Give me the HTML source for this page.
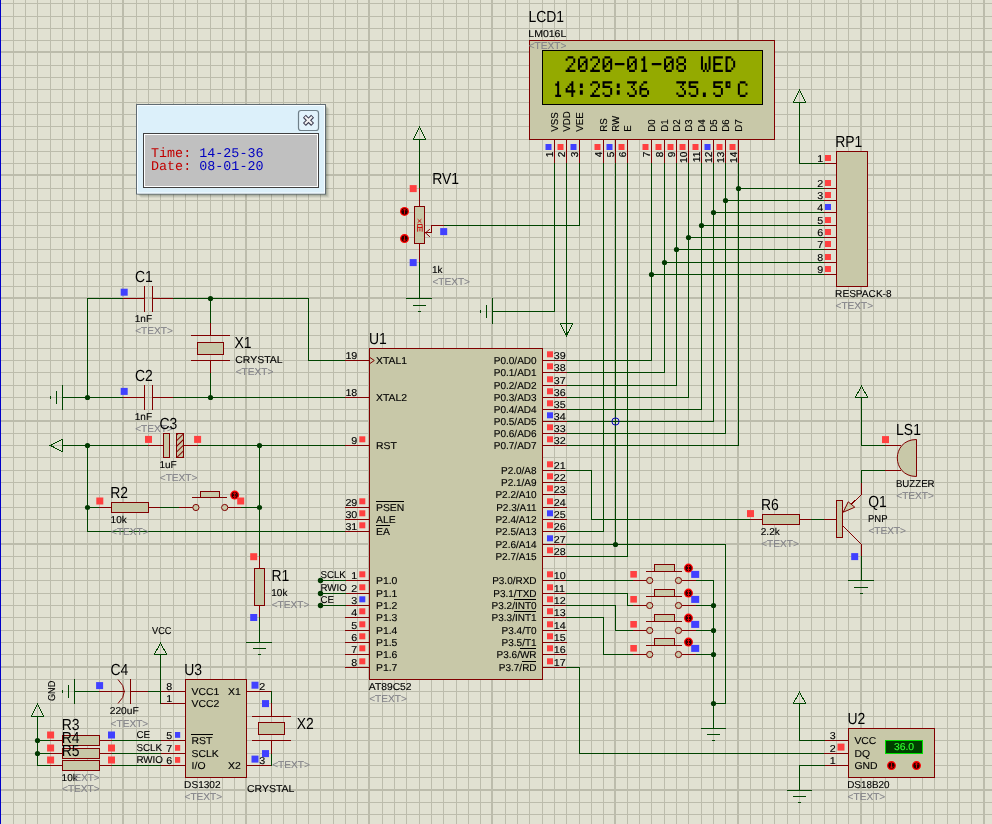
<!DOCTYPE html>
<html><head><meta charset="utf-8"><title>Proteus schematic</title>
<style>
html,body{margin:0;padding:0;background:#e1e1d2;overflow:hidden}
svg{display:block;font-family:"Liberation Sans",sans-serif;will-change:transform;text-rendering:geometricPrecision}
svg polyline,svg line,svg rect{shape-rendering:crispEdges}
svg .aa, svg .aa *{shape-rendering:auto}
</style></head><body>
<svg width="992" height="824" viewBox="0 0 992 824">
<rect x="0" y="0" width="992" height="824" fill="#e1e1d2"/>
<g fill="#bcbcac"><rect x="-1" y="0" width="2" height="824"/><rect x="13" y="0" width="1" height="824"/><rect x="25" y="0" width="1" height="824"/><rect x="37" y="0" width="1" height="824"/><rect x="50" y="0" width="1" height="824"/><rect x="62" y="0" width="1" height="824"/><rect x="74" y="0" width="1" height="824"/><rect x="87" y="0" width="1" height="824"/><rect x="99" y="0" width="1" height="824"/><rect x="111" y="0" width="1" height="824"/><rect x="122" y="0" width="2" height="824"/><rect x="136" y="0" width="1" height="824"/><rect x="148" y="0" width="1" height="824"/><rect x="160" y="0" width="1" height="824"/><rect x="173" y="0" width="1" height="824"/><rect x="185" y="0" width="1" height="824"/><rect x="197" y="0" width="1" height="824"/><rect x="210" y="0" width="1" height="824"/><rect x="222" y="0" width="1" height="824"/><rect x="234" y="0" width="1" height="824"/><rect x="245" y="0" width="2" height="824"/><rect x="259" y="0" width="1" height="824"/><rect x="271" y="0" width="1" height="824"/><rect x="283" y="0" width="1" height="824"/><rect x="296" y="0" width="1" height="824"/><rect x="308" y="0" width="1" height="824"/><rect x="320" y="0" width="1" height="824"/><rect x="333" y="0" width="1" height="824"/><rect x="345" y="0" width="1" height="824"/><rect x="357" y="0" width="1" height="824"/><rect x="368" y="0" width="2" height="824"/><rect x="382" y="0" width="1" height="824"/><rect x="394" y="0" width="1" height="824"/><rect x="406" y="0" width="1" height="824"/><rect x="419" y="0" width="1" height="824"/><rect x="431" y="0" width="1" height="824"/><rect x="443" y="0" width="1" height="824"/><rect x="456" y="0" width="1" height="824"/><rect x="468" y="0" width="1" height="824"/><rect x="480" y="0" width="1" height="824"/><rect x="491" y="0" width="2" height="824"/><rect x="505" y="0" width="1" height="824"/><rect x="517" y="0" width="1" height="824"/><rect x="529" y="0" width="1" height="824"/><rect x="542" y="0" width="1" height="824"/><rect x="554" y="0" width="1" height="824"/><rect x="566" y="0" width="1" height="824"/><rect x="579" y="0" width="1" height="824"/><rect x="591" y="0" width="1" height="824"/><rect x="603" y="0" width="1" height="824"/><rect x="614" y="0" width="2" height="824"/><rect x="627" y="0" width="1" height="824"/><rect x="639" y="0" width="1" height="824"/><rect x="651" y="0" width="1" height="824"/><rect x="664" y="0" width="1" height="824"/><rect x="676" y="0" width="1" height="824"/><rect x="688" y="0" width="1" height="824"/><rect x="701" y="0" width="1" height="824"/><rect x="713" y="0" width="1" height="824"/><rect x="725" y="0" width="1" height="824"/><rect x="737" y="0" width="2" height="824"/><rect x="750" y="0" width="1" height="824"/><rect x="762" y="0" width="1" height="824"/><rect x="774" y="0" width="1" height="824"/><rect x="787" y="0" width="1" height="824"/><rect x="799" y="0" width="1" height="824"/><rect x="811" y="0" width="1" height="824"/><rect x="824" y="0" width="1" height="824"/><rect x="836" y="0" width="1" height="824"/><rect x="848" y="0" width="1" height="824"/><rect x="860" y="0" width="2" height="824"/><rect x="873" y="0" width="1" height="824"/><rect x="885" y="0" width="1" height="824"/><rect x="897" y="0" width="1" height="824"/><rect x="910" y="0" width="1" height="824"/><rect x="922" y="0" width="1" height="824"/><rect x="934" y="0" width="1" height="824"/><rect x="947" y="0" width="1" height="824"/><rect x="959" y="0" width="1" height="824"/><rect x="971" y="0" width="1" height="824"/><rect x="983" y="0" width="2" height="824"/><rect x="0" y="3" width="992" height="1"/><rect x="0" y="16" width="992" height="1"/><rect x="0" y="28" width="992" height="1"/><rect x="0" y="40" width="992" height="1"/><rect x="0" y="51" width="992" height="2"/><rect x="0" y="65" width="992" height="1"/><rect x="0" y="77" width="992" height="1"/><rect x="0" y="89" width="992" height="1"/><rect x="0" y="102" width="992" height="1"/><rect x="0" y="114" width="992" height="1"/><rect x="0" y="126" width="992" height="1"/><rect x="0" y="139" width="992" height="1"/><rect x="0" y="151" width="992" height="1"/><rect x="0" y="163" width="992" height="1"/><rect x="0" y="174" width="992" height="2"/><rect x="0" y="188" width="992" height="1"/><rect x="0" y="200" width="992" height="1"/><rect x="0" y="212" width="992" height="1"/><rect x="0" y="225" width="992" height="1"/><rect x="0" y="237" width="992" height="1"/><rect x="0" y="249" width="992" height="1"/><rect x="0" y="262" width="992" height="1"/><rect x="0" y="274" width="992" height="1"/><rect x="0" y="286" width="992" height="1"/><rect x="0" y="297" width="992" height="2"/><rect x="0" y="311" width="992" height="1"/><rect x="0" y="323" width="992" height="1"/><rect x="0" y="335" width="992" height="1"/><rect x="0" y="348" width="992" height="1"/><rect x="0" y="360" width="992" height="1"/><rect x="0" y="372" width="992" height="1"/><rect x="0" y="385" width="992" height="1"/><rect x="0" y="397" width="992" height="1"/><rect x="0" y="409" width="992" height="1"/><rect x="0" y="420" width="992" height="2"/><rect x="0" y="433" width="992" height="1"/><rect x="0" y="445" width="992" height="1"/><rect x="0" y="457" width="992" height="1"/><rect x="0" y="470" width="992" height="1"/><rect x="0" y="482" width="992" height="1"/><rect x="0" y="494" width="992" height="1"/><rect x="0" y="507" width="992" height="1"/><rect x="0" y="519" width="992" height="1"/><rect x="0" y="531" width="992" height="1"/><rect x="0" y="543" width="992" height="2"/><rect x="0" y="556" width="992" height="1"/><rect x="0" y="568" width="992" height="1"/><rect x="0" y="580" width="992" height="1"/><rect x="0" y="593" width="992" height="1"/><rect x="0" y="605" width="992" height="1"/><rect x="0" y="617" width="992" height="1"/><rect x="0" y="630" width="992" height="1"/><rect x="0" y="642" width="992" height="1"/><rect x="0" y="654" width="992" height="1"/><rect x="0" y="666" width="992" height="2"/><rect x="0" y="679" width="992" height="1"/><rect x="0" y="691" width="992" height="1"/><rect x="0" y="703" width="992" height="1"/><rect x="0" y="716" width="992" height="1"/><rect x="0" y="728" width="992" height="1"/><rect x="0" y="740" width="992" height="1"/><rect x="0" y="753" width="992" height="1"/><rect x="0" y="765" width="992" height="1"/><rect x="0" y="777" width="992" height="1"/><rect x="0" y="789" width="992" height="2"/><rect x="0" y="802" width="992" height="1"/><rect x="0" y="814" width="992" height="1"/></g>
<rect x="0" y="0" width="1.3" height="824" fill="#0000c8"/>
<polyline points="554.5,139.5 554.5,163.5" fill="none" stroke="#800000" stroke-width="1" stroke-linecap="square" />
<polyline points="566.5,139.5 566.5,163.5" fill="none" stroke="#800000" stroke-width="1" stroke-linecap="square" />
<polyline points="579.5,139.5 579.5,163.5" fill="none" stroke="#800000" stroke-width="1" stroke-linecap="square" />
<polyline points="603.5,139.5 603.5,163.5" fill="none" stroke="#800000" stroke-width="1" stroke-linecap="square" />
<polyline points="615.5,139.5 615.5,163.5" fill="none" stroke="#800000" stroke-width="1" stroke-linecap="square" />
<polyline points="627.5,139.5 627.5,163.5" fill="none" stroke="#800000" stroke-width="1" stroke-linecap="square" />
<polyline points="651.5,139.5 651.5,163.5" fill="none" stroke="#800000" stroke-width="1" stroke-linecap="square" />
<polyline points="664.5,139.5 664.5,163.5" fill="none" stroke="#800000" stroke-width="1" stroke-linecap="square" />
<polyline points="676.5,139.5 676.5,163.5" fill="none" stroke="#800000" stroke-width="1" stroke-linecap="square" />
<polyline points="688.5,139.5 688.5,163.5" fill="none" stroke="#800000" stroke-width="1" stroke-linecap="square" />
<polyline points="701.5,139.5 701.5,163.5" fill="none" stroke="#800000" stroke-width="1" stroke-linecap="square" />
<polyline points="713.5,139.5 713.5,163.5" fill="none" stroke="#800000" stroke-width="1" stroke-linecap="square" />
<polyline points="725.5,139.5 725.5,163.5" fill="none" stroke="#800000" stroke-width="1" stroke-linecap="square" />
<polyline points="738.5,139.5 738.5,163.5" fill="none" stroke="#800000" stroke-width="1" stroke-linecap="square" />
<rect x="529.5" y="40.5" width="245" height="99" fill="#c8c8a8" stroke="#800000" stroke-width="1" />
<rect x="542.5" y="50.5" width="220" height="54" fill="#94aa00" stroke="#000000" stroke-width="1" />
<path class="aa" d="M567.55 56.25h2.02v2.36h-2.02zM569.45 56.25h2.02v2.36h-2.02zM571.35 56.25h2.02v2.36h-2.02zM565.65 58.49h2.02v2.36h-2.02zM573.25 58.49h2.02v2.36h-2.02zM573.25 60.73h2.02v2.36h-2.02zM571.35 62.97h2.02v2.36h-2.02zM569.45 65.21h2.02v2.36h-2.02zM567.55 67.45h2.02v2.36h-2.02zM565.65 69.69h2.02v2.36h-2.02zM567.55 69.69h2.02v2.36h-2.02zM569.45 69.69h2.02v2.36h-2.02zM571.35 69.69h2.02v2.36h-2.02zM573.25 69.69h2.02v2.36h-2.02zM579.85 56.25h2.02v2.36h-2.02zM581.75 56.25h2.02v2.36h-2.02zM583.65 56.25h2.02v2.36h-2.02zM577.95 58.49h2.02v2.36h-2.02zM585.55 58.49h2.02v2.36h-2.02zM577.95 60.73h2.02v2.36h-2.02zM583.65 60.73h2.02v2.36h-2.02zM585.55 60.73h2.02v2.36h-2.02zM577.95 62.97h2.02v2.36h-2.02zM581.75 62.97h2.02v2.36h-2.02zM585.55 62.97h2.02v2.36h-2.02zM577.95 65.21h2.02v2.36h-2.02zM579.85 65.21h2.02v2.36h-2.02zM585.55 65.21h2.02v2.36h-2.02zM577.95 67.45h2.02v2.36h-2.02zM585.55 67.45h2.02v2.36h-2.02zM579.85 69.69h2.02v2.36h-2.02zM581.75 69.69h2.02v2.36h-2.02zM583.65 69.69h2.02v2.36h-2.02zM592.15 56.25h2.02v2.36h-2.02zM594.05 56.25h2.02v2.36h-2.02zM595.95 56.25h2.02v2.36h-2.02zM590.25 58.49h2.02v2.36h-2.02zM597.85 58.49h2.02v2.36h-2.02zM597.85 60.73h2.02v2.36h-2.02zM595.95 62.97h2.02v2.36h-2.02zM594.05 65.21h2.02v2.36h-2.02zM592.15 67.45h2.02v2.36h-2.02zM590.25 69.69h2.02v2.36h-2.02zM592.15 69.69h2.02v2.36h-2.02zM594.05 69.69h2.02v2.36h-2.02zM595.95 69.69h2.02v2.36h-2.02zM597.85 69.69h2.02v2.36h-2.02zM604.45 56.25h2.02v2.36h-2.02zM606.35 56.25h2.02v2.36h-2.02zM608.25 56.25h2.02v2.36h-2.02zM602.55 58.49h2.02v2.36h-2.02zM610.15 58.49h2.02v2.36h-2.02zM602.55 60.73h2.02v2.36h-2.02zM608.25 60.73h2.02v2.36h-2.02zM610.15 60.73h2.02v2.36h-2.02zM602.55 62.97h2.02v2.36h-2.02zM606.35 62.97h2.02v2.36h-2.02zM610.15 62.97h2.02v2.36h-2.02zM602.55 65.21h2.02v2.36h-2.02zM604.45 65.21h2.02v2.36h-2.02zM610.15 65.21h2.02v2.36h-2.02zM602.55 67.45h2.02v2.36h-2.02zM610.15 67.45h2.02v2.36h-2.02zM604.45 69.69h2.02v2.36h-2.02zM606.35 69.69h2.02v2.36h-2.02zM608.25 69.69h2.02v2.36h-2.02zM614.85 62.97h2.02v2.36h-2.02zM616.75 62.97h2.02v2.36h-2.02zM618.65 62.97h2.02v2.36h-2.02zM620.55 62.97h2.02v2.36h-2.02zM622.45 62.97h2.02v2.36h-2.02zM629.05 56.25h2.02v2.36h-2.02zM630.95 56.25h2.02v2.36h-2.02zM632.85 56.25h2.02v2.36h-2.02zM627.15 58.49h2.02v2.36h-2.02zM634.75 58.49h2.02v2.36h-2.02zM627.15 60.73h2.02v2.36h-2.02zM632.85 60.73h2.02v2.36h-2.02zM634.75 60.73h2.02v2.36h-2.02zM627.15 62.97h2.02v2.36h-2.02zM630.95 62.97h2.02v2.36h-2.02zM634.75 62.97h2.02v2.36h-2.02zM627.15 65.21h2.02v2.36h-2.02zM629.05 65.21h2.02v2.36h-2.02zM634.75 65.21h2.02v2.36h-2.02zM627.15 67.45h2.02v2.36h-2.02zM634.75 67.45h2.02v2.36h-2.02zM629.05 69.69h2.02v2.36h-2.02zM630.95 69.69h2.02v2.36h-2.02zM632.85 69.69h2.02v2.36h-2.02zM643.25 56.25h2.02v2.36h-2.02zM641.35 58.49h2.02v2.36h-2.02zM643.25 58.49h2.02v2.36h-2.02zM643.25 60.73h2.02v2.36h-2.02zM643.25 62.97h2.02v2.36h-2.02zM643.25 65.21h2.02v2.36h-2.02zM643.25 67.45h2.02v2.36h-2.02zM641.35 69.69h2.02v2.36h-2.02zM643.25 69.69h2.02v2.36h-2.02zM645.15 69.69h2.02v2.36h-2.02zM651.75 62.97h2.02v2.36h-2.02zM653.65 62.97h2.02v2.36h-2.02zM655.55 62.97h2.02v2.36h-2.02zM657.45 62.97h2.02v2.36h-2.02zM659.35 62.97h2.02v2.36h-2.02zM665.95 56.25h2.02v2.36h-2.02zM667.85 56.25h2.02v2.36h-2.02zM669.75 56.25h2.02v2.36h-2.02zM664.05 58.49h2.02v2.36h-2.02zM671.65 58.49h2.02v2.36h-2.02zM664.05 60.73h2.02v2.36h-2.02zM669.75 60.73h2.02v2.36h-2.02zM671.65 60.73h2.02v2.36h-2.02zM664.05 62.97h2.02v2.36h-2.02zM667.85 62.97h2.02v2.36h-2.02zM671.65 62.97h2.02v2.36h-2.02zM664.05 65.21h2.02v2.36h-2.02zM665.95 65.21h2.02v2.36h-2.02zM671.65 65.21h2.02v2.36h-2.02zM664.05 67.45h2.02v2.36h-2.02zM671.65 67.45h2.02v2.36h-2.02zM665.95 69.69h2.02v2.36h-2.02zM667.85 69.69h2.02v2.36h-2.02zM669.75 69.69h2.02v2.36h-2.02zM678.25 56.25h2.02v2.36h-2.02zM680.15 56.25h2.02v2.36h-2.02zM682.05 56.25h2.02v2.36h-2.02zM676.35 58.49h2.02v2.36h-2.02zM683.95 58.49h2.02v2.36h-2.02zM676.35 60.73h2.02v2.36h-2.02zM683.95 60.73h2.02v2.36h-2.02zM678.25 62.97h2.02v2.36h-2.02zM680.15 62.97h2.02v2.36h-2.02zM682.05 62.97h2.02v2.36h-2.02zM676.35 65.21h2.02v2.36h-2.02zM683.95 65.21h2.02v2.36h-2.02zM676.35 67.45h2.02v2.36h-2.02zM683.95 67.45h2.02v2.36h-2.02zM678.25 69.69h2.02v2.36h-2.02zM680.15 69.69h2.02v2.36h-2.02zM682.05 69.69h2.02v2.36h-2.02zM700.95 56.25h2.02v2.36h-2.02zM708.55 56.25h2.02v2.36h-2.02zM700.95 58.49h2.02v2.36h-2.02zM708.55 58.49h2.02v2.36h-2.02zM700.95 60.73h2.02v2.36h-2.02zM708.55 60.73h2.02v2.36h-2.02zM700.95 62.97h2.02v2.36h-2.02zM704.75 62.97h2.02v2.36h-2.02zM708.55 62.97h2.02v2.36h-2.02zM700.95 65.21h2.02v2.36h-2.02zM704.75 65.21h2.02v2.36h-2.02zM708.55 65.21h2.02v2.36h-2.02zM700.95 67.45h2.02v2.36h-2.02zM704.75 67.45h2.02v2.36h-2.02zM708.55 67.45h2.02v2.36h-2.02zM702.85 69.69h2.02v2.36h-2.02zM706.65 69.69h2.02v2.36h-2.02zM713.25 56.25h2.02v2.36h-2.02zM715.15 56.25h2.02v2.36h-2.02zM717.05 56.25h2.02v2.36h-2.02zM718.95 56.25h2.02v2.36h-2.02zM720.85 56.25h2.02v2.36h-2.02zM713.25 58.49h2.02v2.36h-2.02zM713.25 60.73h2.02v2.36h-2.02zM713.25 62.97h2.02v2.36h-2.02zM715.15 62.97h2.02v2.36h-2.02zM717.05 62.97h2.02v2.36h-2.02zM718.95 62.97h2.02v2.36h-2.02zM713.25 65.21h2.02v2.36h-2.02zM713.25 67.45h2.02v2.36h-2.02zM713.25 69.69h2.02v2.36h-2.02zM715.15 69.69h2.02v2.36h-2.02zM717.05 69.69h2.02v2.36h-2.02zM718.95 69.69h2.02v2.36h-2.02zM720.85 69.69h2.02v2.36h-2.02zM725.55 56.25h2.02v2.36h-2.02zM727.45 56.25h2.02v2.36h-2.02zM729.35 56.25h2.02v2.36h-2.02zM725.55 58.49h2.02v2.36h-2.02zM731.25 58.49h2.02v2.36h-2.02zM725.55 60.73h2.02v2.36h-2.02zM733.15 60.73h2.02v2.36h-2.02zM725.55 62.97h2.02v2.36h-2.02zM733.15 62.97h2.02v2.36h-2.02zM725.55 65.21h2.02v2.36h-2.02zM733.15 65.21h2.02v2.36h-2.02zM725.55 67.45h2.02v2.36h-2.02zM731.25 67.45h2.02v2.36h-2.02zM725.55 69.69h2.02v2.36h-2.02zM727.45 69.69h2.02v2.36h-2.02zM729.35 69.69h2.02v2.36h-2.02zM557.15 81.25h2.02v2.36h-2.02zM555.25 83.49h2.02v2.36h-2.02zM557.15 83.49h2.02v2.36h-2.02zM557.15 85.73h2.02v2.36h-2.02zM557.15 87.97h2.02v2.36h-2.02zM557.15 90.21h2.02v2.36h-2.02zM557.15 92.45h2.02v2.36h-2.02zM555.25 94.69h2.02v2.36h-2.02zM557.15 94.69h2.02v2.36h-2.02zM559.05 94.69h2.02v2.36h-2.02zM571.35 81.25h2.02v2.36h-2.02zM569.45 83.49h2.02v2.36h-2.02zM571.35 83.49h2.02v2.36h-2.02zM567.55 85.73h2.02v2.36h-2.02zM571.35 85.73h2.02v2.36h-2.02zM565.65 87.97h2.02v2.36h-2.02zM571.35 87.97h2.02v2.36h-2.02zM565.65 90.21h2.02v2.36h-2.02zM567.55 90.21h2.02v2.36h-2.02zM569.45 90.21h2.02v2.36h-2.02zM571.35 90.21h2.02v2.36h-2.02zM573.25 90.21h2.02v2.36h-2.02zM571.35 92.45h2.02v2.36h-2.02zM571.35 94.69h2.02v2.36h-2.02zM579.85 83.49h2.97v2.36h-2.97zM579.85 85.73h2.97v2.36h-2.97zM579.85 90.21h2.97v2.36h-2.97zM579.85 92.45h2.97v2.36h-2.97zM592.15 81.25h2.02v2.36h-2.02zM594.05 81.25h2.02v2.36h-2.02zM595.95 81.25h2.02v2.36h-2.02zM590.25 83.49h2.02v2.36h-2.02zM597.85 83.49h2.02v2.36h-2.02zM597.85 85.73h2.02v2.36h-2.02zM595.95 87.97h2.02v2.36h-2.02zM594.05 90.21h2.02v2.36h-2.02zM592.15 92.45h2.02v2.36h-2.02zM590.25 94.69h2.02v2.36h-2.02zM592.15 94.69h2.02v2.36h-2.02zM594.05 94.69h2.02v2.36h-2.02zM595.95 94.69h2.02v2.36h-2.02zM597.85 94.69h2.02v2.36h-2.02zM602.55 81.25h2.02v2.36h-2.02zM604.45 81.25h2.02v2.36h-2.02zM606.35 81.25h2.02v2.36h-2.02zM608.25 81.25h2.02v2.36h-2.02zM610.15 81.25h2.02v2.36h-2.02zM602.55 83.49h2.02v2.36h-2.02zM602.55 85.73h2.02v2.36h-2.02zM604.45 85.73h2.02v2.36h-2.02zM606.35 85.73h2.02v2.36h-2.02zM608.25 85.73h2.02v2.36h-2.02zM610.15 87.97h2.02v2.36h-2.02zM610.15 90.21h2.02v2.36h-2.02zM602.55 92.45h2.02v2.36h-2.02zM610.15 92.45h2.02v2.36h-2.02zM604.45 94.69h2.02v2.36h-2.02zM606.35 94.69h2.02v2.36h-2.02zM608.25 94.69h2.02v2.36h-2.02zM616.75 83.49h2.97v2.36h-2.97zM616.75 85.73h2.97v2.36h-2.97zM616.75 90.21h2.97v2.36h-2.97zM616.75 92.45h2.97v2.36h-2.97zM627.15 81.25h2.02v2.36h-2.02zM629.05 81.25h2.02v2.36h-2.02zM630.95 81.25h2.02v2.36h-2.02zM632.85 81.25h2.02v2.36h-2.02zM634.75 81.25h2.02v2.36h-2.02zM632.85 83.49h2.02v2.36h-2.02zM630.95 85.73h2.02v2.36h-2.02zM632.85 87.97h2.02v2.36h-2.02zM634.75 90.21h2.02v2.36h-2.02zM627.15 92.45h2.02v2.36h-2.02zM634.75 92.45h2.02v2.36h-2.02zM629.05 94.69h2.02v2.36h-2.02zM630.95 94.69h2.02v2.36h-2.02zM632.85 94.69h2.02v2.36h-2.02zM643.25 81.25h2.02v2.36h-2.02zM645.15 81.25h2.02v2.36h-2.02zM641.35 83.49h2.02v2.36h-2.02zM639.45 85.73h2.02v2.36h-2.02zM639.45 87.97h2.02v2.36h-2.02zM641.35 87.97h2.02v2.36h-2.02zM643.25 87.97h2.02v2.36h-2.02zM645.15 87.97h2.02v2.36h-2.02zM639.45 90.21h2.02v2.36h-2.02zM647.05 90.21h2.02v2.36h-2.02zM639.45 92.45h2.02v2.36h-2.02zM647.05 92.45h2.02v2.36h-2.02zM641.35 94.69h2.02v2.36h-2.02zM643.25 94.69h2.02v2.36h-2.02zM645.15 94.69h2.02v2.36h-2.02zM676.35 81.25h2.02v2.36h-2.02zM678.25 81.25h2.02v2.36h-2.02zM680.15 81.25h2.02v2.36h-2.02zM682.05 81.25h2.02v2.36h-2.02zM683.95 81.25h2.02v2.36h-2.02zM682.05 83.49h2.02v2.36h-2.02zM680.15 85.73h2.02v2.36h-2.02zM682.05 87.97h2.02v2.36h-2.02zM683.95 90.21h2.02v2.36h-2.02zM676.35 92.45h2.02v2.36h-2.02zM683.95 92.45h2.02v2.36h-2.02zM678.25 94.69h2.02v2.36h-2.02zM680.15 94.69h2.02v2.36h-2.02zM682.05 94.69h2.02v2.36h-2.02zM688.65 81.25h2.02v2.36h-2.02zM690.55 81.25h2.02v2.36h-2.02zM692.45 81.25h2.02v2.36h-2.02zM694.35 81.25h2.02v2.36h-2.02zM696.25 81.25h2.02v2.36h-2.02zM688.65 83.49h2.02v2.36h-2.02zM688.65 85.73h2.02v2.36h-2.02zM690.55 85.73h2.02v2.36h-2.02zM692.45 85.73h2.02v2.36h-2.02zM694.35 85.73h2.02v2.36h-2.02zM696.25 87.97h2.02v2.36h-2.02zM696.25 90.21h2.02v2.36h-2.02zM688.65 92.45h2.02v2.36h-2.02zM696.25 92.45h2.02v2.36h-2.02zM690.55 94.69h2.02v2.36h-2.02zM692.45 94.69h2.02v2.36h-2.02zM694.35 94.69h2.02v2.36h-2.02zM702.85 92.45h2.97v2.36h-2.97zM702.85 94.69h2.97v2.36h-2.97zM713.25 81.25h2.02v2.36h-2.02zM715.15 81.25h2.02v2.36h-2.02zM717.05 81.25h2.02v2.36h-2.02zM718.95 81.25h2.02v2.36h-2.02zM720.85 81.25h2.02v2.36h-2.02zM713.25 83.49h2.02v2.36h-2.02zM713.25 85.73h2.02v2.36h-2.02zM715.15 85.73h2.02v2.36h-2.02zM717.05 85.73h2.02v2.36h-2.02zM718.95 85.73h2.02v2.36h-2.02zM720.85 87.97h2.02v2.36h-2.02zM720.85 90.21h2.02v2.36h-2.02zM713.25 92.45h2.02v2.36h-2.02zM720.85 92.45h2.02v2.36h-2.02zM715.15 94.69h2.02v2.36h-2.02zM717.05 94.69h2.02v2.36h-2.02zM718.95 94.69h2.02v2.36h-2.02zM725.55 81.25h2.02v2.36h-2.02zM727.45 81.25h2.97v2.36h-2.97zM725.55 83.49h2.02v2.36h-2.02zM729.35 83.49h1.07v2.36h-1.07zM725.55 85.73h2.02v2.36h-2.02zM727.45 85.73h2.97v2.36h-2.97zM739.75 81.25h2.02v2.36h-2.02zM741.65 81.25h2.02v2.36h-2.02zM743.55 81.25h2.02v2.36h-2.02zM737.85 83.49h2.02v2.36h-2.02zM745.45 83.49h2.02v2.36h-2.02zM737.85 85.73h2.02v2.36h-2.02zM737.85 87.97h2.02v2.36h-2.02zM737.85 90.21h2.02v2.36h-2.02zM737.85 92.45h2.02v2.36h-2.02zM745.45 92.45h2.02v2.36h-2.02zM739.75 94.69h2.02v2.36h-2.02zM741.65 94.69h2.02v2.36h-2.02zM743.55 94.69h2.02v2.36h-2.02z" fill="#000000"/>
<rect x="545.5" y="144" width="6" height="6" fill="#4040ff" class="aa"/>
<text transform="translate(558.1 131.8) rotate(-90) scale(0.97 1)" font-size="10" fill="#000000" stroke="#000000" stroke-width="0.13" >VSS</text>
<text transform="translate(552.9 151.8) rotate(-90)" font-size="10" fill="#000000" text-anchor="end" stroke="#000000" stroke-width="0.2" >1</text>
<rect x="557.5" y="144" width="6" height="6" fill="#ff4040" class="aa"/>
<text transform="translate(570.1 131.8) rotate(-90) scale(0.97 1)" font-size="10" fill="#000000" stroke="#000000" stroke-width="0.13" >VDD</text>
<text transform="translate(564.9 151.8) rotate(-90)" font-size="10" fill="#000000" text-anchor="end" stroke="#000000" stroke-width="0.2" >2</text>
<rect x="570.5" y="144" width="6" height="6" fill="#4040ff" class="aa"/>
<text transform="translate(583.1 131.8) rotate(-90) scale(0.97 1)" font-size="10" fill="#000000" stroke="#000000" stroke-width="0.13" >VEE</text>
<text transform="translate(577.9 151.8) rotate(-90)" font-size="10" fill="#000000" text-anchor="end" stroke="#000000" stroke-width="0.2" >3</text>
<rect x="594.5" y="144" width="6" height="6" fill="#ff4040" class="aa"/>
<text transform="translate(607.1 131.8) rotate(-90) scale(0.97 1)" font-size="10" fill="#000000" stroke="#000000" stroke-width="0.13" >RS</text>
<text transform="translate(601.9 151.8) rotate(-90)" font-size="10" fill="#000000" text-anchor="end" stroke="#000000" stroke-width="0.2" >4</text>
<rect x="606.5" y="144" width="6" height="6" fill="#4040ff" class="aa"/>
<text transform="translate(619.1 131.8) rotate(-90) scale(0.97 1)" font-size="10" fill="#000000" stroke="#000000" stroke-width="0.13" >RW</text>
<text transform="translate(613.9 151.8) rotate(-90)" font-size="10" fill="#000000" text-anchor="end" stroke="#000000" stroke-width="0.2" >5</text>
<rect x="618.5" y="144" width="6" height="6" fill="#ff4040" class="aa"/>
<text transform="translate(631.1 131.8) rotate(-90) scale(0.97 1)" font-size="10" fill="#000000" stroke="#000000" stroke-width="0.13" >E</text>
<text transform="translate(625.9 151.8) rotate(-90)" font-size="10" fill="#000000" text-anchor="end" stroke="#000000" stroke-width="0.2" >6</text>
<rect x="642.5" y="144" width="6" height="6" fill="#ff4040" class="aa"/>
<text transform="translate(655.1 131.8) rotate(-90) scale(0.97 1)" font-size="10" fill="#000000" stroke="#000000" stroke-width="0.13" >D0</text>
<text transform="translate(649.9 151.8) rotate(-90)" font-size="10" fill="#000000" text-anchor="end" stroke="#000000" stroke-width="0.2" >7</text>
<rect x="655.5" y="144" width="6" height="6" fill="#ff4040" class="aa"/>
<text transform="translate(668.1 131.8) rotate(-90) scale(0.97 1)" font-size="10" fill="#000000" stroke="#000000" stroke-width="0.13" >D1</text>
<text transform="translate(662.9 151.8) rotate(-90)" font-size="10" fill="#000000" text-anchor="end" stroke="#000000" stroke-width="0.2" >8</text>
<rect x="667.5" y="144" width="6" height="6" fill="#ff4040" class="aa"/>
<text transform="translate(680.1 131.8) rotate(-90) scale(0.97 1)" font-size="10" fill="#000000" stroke="#000000" stroke-width="0.13" >D2</text>
<text transform="translate(674.9 151.8) rotate(-90)" font-size="10" fill="#000000" text-anchor="end" stroke="#000000" stroke-width="0.2" >9</text>
<rect x="679.5" y="144" width="6" height="6" fill="#ff4040" class="aa"/>
<text transform="translate(692.1 131.8) rotate(-90) scale(0.97 1)" font-size="10" fill="#000000" stroke="#000000" stroke-width="0.13" >D3</text>
<text transform="translate(686.9 151.8) rotate(-90)" font-size="10" fill="#000000" text-anchor="end" stroke="#000000" stroke-width="0.2" >10</text>
<rect x="692.5" y="144" width="6" height="6" fill="#ff4040" class="aa"/>
<text transform="translate(705.1 131.8) rotate(-90) scale(0.97 1)" font-size="10" fill="#000000" stroke="#000000" stroke-width="0.13" >D4</text>
<text transform="translate(699.9 151.8) rotate(-90)" font-size="10" fill="#000000" text-anchor="end" stroke="#000000" stroke-width="0.2" >11</text>
<rect x="704.5" y="144" width="6" height="6" fill="#4040ff" class="aa"/>
<text transform="translate(717.1 131.8) rotate(-90) scale(0.97 1)" font-size="10" fill="#000000" stroke="#000000" stroke-width="0.13" >D5</text>
<text transform="translate(711.9 151.8) rotate(-90)" font-size="10" fill="#000000" text-anchor="end" stroke="#000000" stroke-width="0.2" >12</text>
<rect x="716.5" y="144" width="6" height="6" fill="#ff4040" class="aa"/>
<text transform="translate(729.1 131.8) rotate(-90) scale(0.97 1)" font-size="10" fill="#000000" stroke="#000000" stroke-width="0.13" >D6</text>
<text transform="translate(723.9 151.8) rotate(-90)" font-size="10" fill="#000000" text-anchor="end" stroke="#000000" stroke-width="0.2" >13</text>
<rect x="729.5" y="144" width="6" height="6" fill="#ff4040" class="aa"/>
<text transform="translate(742.1 131.8) rotate(-90) scale(0.97 1)" font-size="10" fill="#000000" stroke="#000000" stroke-width="0.13" >D7</text>
<text transform="translate(736.9 151.8) rotate(-90)" font-size="10" fill="#000000" text-anchor="end" stroke="#000000" stroke-width="0.2" >14</text>
<text transform="translate(528.5 22) scale(0.87 1)" font-size="16" fill="#000">LCD1</text>
<text transform="translate(528.3 37)" font-size="10" fill="#000000" textLength="38" lengthAdjust="spacingAndGlyphs" stroke="#000000" stroke-width="0.13" >LM016L</text>
<text transform="translate(528.7 49)" font-size="10" fill="#828288" textLength="37.6" lengthAdjust="spacingAndGlyphs" stroke="#828288" stroke-width="0.1" >&lt;TEXT&gt;</text>
<polyline points="554.5,163.5 554.5,311.5 492.5,311.5" fill="none" stroke="#004400" stroke-width="1" stroke-linecap="square" />
<line x1="492.5" y1="298.5" x2="492.5" y2="323.5" stroke="#004400" stroke-width="1" stroke-linecap="square"/>
<line x1="486.5" y1="305.5" x2="486.5" y2="317.5" stroke="#004400" stroke-width="1" stroke-linecap="square"/>
<line x1="480.5" y1="310.5" x2="480.5" y2="312.5" stroke="#004400" stroke-width="1" stroke-linecap="square"/>
<polyline points="566.5,163.5 566.5,335.5" fill="none" stroke="#004400" stroke-width="1" stroke-linecap="square" />
<polyline points="560.2,323.5 572.8,323.5 566.5,335.5 560.2,323.5" fill="none" stroke="#004400" stroke-width="1" stroke-linecap="square" />
<polyline points="579.5,163.5 579.5,225.5 443.5,225.5" fill="none" stroke="#004400" stroke-width="1" stroke-linecap="square" />
<polyline points="603.5,163.5 603.5,531.5 566.5,531.5" fill="none" stroke="#004400" stroke-width="1" stroke-linecap="square" />
<polyline points="615.5,163.5 615.5,544.5" fill="none" stroke="#004400" stroke-width="1" stroke-linecap="square" />
<polyline points="627.5,163.5 627.5,556.5 566.5,556.5" fill="none" stroke="#004400" stroke-width="1" stroke-linecap="square" />
<polyline points="651.5,163.5 651.5,360.5 566.5,360.5" fill="none" stroke="#004400" stroke-width="1" stroke-linecap="square" />
<polyline points="651.5,274.5 824.5,274.5" fill="none" stroke="#004400" stroke-width="1" stroke-linecap="square" />
<circle cx="651.5" cy="274.5" r="2.6" fill="#003800"/>
<polyline points="664.5,163.5 664.5,372.5 566.5,372.5" fill="none" stroke="#004400" stroke-width="1" stroke-linecap="square" />
<polyline points="664.5,262.5 824.5,262.5" fill="none" stroke="#004400" stroke-width="1" stroke-linecap="square" />
<circle cx="664.5" cy="262.5" r="2.6" fill="#003800"/>
<polyline points="676.5,163.5 676.5,385.5 566.5,385.5" fill="none" stroke="#004400" stroke-width="1" stroke-linecap="square" />
<polyline points="676.5,249.5 824.5,249.5" fill="none" stroke="#004400" stroke-width="1" stroke-linecap="square" />
<circle cx="676.5" cy="249.5" r="2.6" fill="#003800"/>
<polyline points="688.5,163.5 688.5,397.5 566.5,397.5" fill="none" stroke="#004400" stroke-width="1" stroke-linecap="square" />
<polyline points="688.5,237.5 824.5,237.5" fill="none" stroke="#004400" stroke-width="1" stroke-linecap="square" />
<circle cx="688.5" cy="237.5" r="2.6" fill="#003800"/>
<polyline points="701.5,163.5 701.5,409.5 566.5,409.5" fill="none" stroke="#004400" stroke-width="1" stroke-linecap="square" />
<polyline points="701.5,225.5 824.5,225.5" fill="none" stroke="#004400" stroke-width="1" stroke-linecap="square" />
<circle cx="701.5" cy="225.5" r="2.6" fill="#003800"/>
<polyline points="713.5,163.5 713.5,421.5 566.5,421.5" fill="none" stroke="#004400" stroke-width="1" stroke-linecap="square" />
<polyline points="713.5,212.5 824.5,212.5" fill="none" stroke="#004400" stroke-width="1" stroke-linecap="square" />
<circle cx="713.5" cy="212.5" r="2.6" fill="#003800"/>
<polyline points="725.5,163.5 725.5,433.5 566.5,433.5" fill="none" stroke="#004400" stroke-width="1" stroke-linecap="square" />
<polyline points="725.5,200.5 824.5,200.5" fill="none" stroke="#004400" stroke-width="1" stroke-linecap="square" />
<circle cx="725.5" cy="200.5" r="2.6" fill="#003800"/>
<polyline points="738.5,163.5 738.5,445.5 566.5,445.5" fill="none" stroke="#004400" stroke-width="1" stroke-linecap="square" />
<polyline points="738.5,188.5 824.5,188.5" fill="none" stroke="#004400" stroke-width="1" stroke-linecap="square" />
<circle cx="738.5" cy="188.5" r="2.6" fill="#003800"/>
<polyline points="824.5,163.5 836.5,163.5" fill="none" stroke="#800000" stroke-width="1" stroke-linecap="square" />
<rect x="825" y="155" width="6" height="6" fill="#ff4040" class="aa"/>
<text transform="translate(823.3 161.7) scale(1.07 1)" font-size="10" fill="#000000" text-anchor="end" stroke="#000000" stroke-width="0.13" >1</text>
<polyline points="824.5,188.5 836.5,188.5" fill="none" stroke="#800000" stroke-width="1" stroke-linecap="square" />
<rect x="825" y="180" width="6" height="6" fill="#ff4040" class="aa"/>
<text transform="translate(823.3 186.7) scale(1.07 1)" font-size="10" fill="#000000" text-anchor="end" stroke="#000000" stroke-width="0.13" >2</text>
<polyline points="824.5,200.5 836.5,200.5" fill="none" stroke="#800000" stroke-width="1" stroke-linecap="square" />
<rect x="825" y="192" width="6" height="6" fill="#ff4040" class="aa"/>
<text transform="translate(823.3 198.7) scale(1.07 1)" font-size="10" fill="#000000" text-anchor="end" stroke="#000000" stroke-width="0.13" >3</text>
<polyline points="824.5,212.5 836.5,212.5" fill="none" stroke="#800000" stroke-width="1" stroke-linecap="square" />
<rect x="825" y="204" width="6" height="6" fill="#4040ff" class="aa"/>
<text transform="translate(823.3 210.7) scale(1.07 1)" font-size="10" fill="#000000" text-anchor="end" stroke="#000000" stroke-width="0.13" >4</text>
<polyline points="824.5,225.5 836.5,225.5" fill="none" stroke="#800000" stroke-width="1" stroke-linecap="square" />
<rect x="825" y="217" width="6" height="6" fill="#ff4040" class="aa"/>
<text transform="translate(823.3 223.7) scale(1.07 1)" font-size="10" fill="#000000" text-anchor="end" stroke="#000000" stroke-width="0.13" >5</text>
<polyline points="824.5,237.5 836.5,237.5" fill="none" stroke="#800000" stroke-width="1" stroke-linecap="square" />
<rect x="825" y="229" width="6" height="6" fill="#ff4040" class="aa"/>
<text transform="translate(823.3 235.7) scale(1.07 1)" font-size="10" fill="#000000" text-anchor="end" stroke="#000000" stroke-width="0.13" >6</text>
<polyline points="824.5,249.5 836.5,249.5" fill="none" stroke="#800000" stroke-width="1" stroke-linecap="square" />
<rect x="825" y="241" width="6" height="6" fill="#ff4040" class="aa"/>
<text transform="translate(823.3 247.7) scale(1.07 1)" font-size="10" fill="#000000" text-anchor="end" stroke="#000000" stroke-width="0.13" >7</text>
<polyline points="824.5,262.5 836.5,262.5" fill="none" stroke="#800000" stroke-width="1" stroke-linecap="square" />
<rect x="825" y="254" width="6" height="6" fill="#ff4040" class="aa"/>
<text transform="translate(823.3 260.7) scale(1.07 1)" font-size="10" fill="#000000" text-anchor="end" stroke="#000000" stroke-width="0.13" >8</text>
<polyline points="824.5,274.5 836.5,274.5" fill="none" stroke="#800000" stroke-width="1" stroke-linecap="square" />
<rect x="825" y="266" width="6" height="6" fill="#ff4040" class="aa"/>
<text transform="translate(823.3 272.7) scale(1.07 1)" font-size="10" fill="#000000" text-anchor="end" stroke="#000000" stroke-width="0.13" >9</text>
<rect x="836.5" y="151.5" width="31" height="135" fill="#c8c8a8" stroke="#800000" stroke-width="1" />
<text transform="translate(835.2 147) scale(0.87 1)" font-size="16" fill="#000">RP1</text>
<text transform="translate(835.1 297)" font-size="10" fill="#000000" textLength="56.5" lengthAdjust="spacingAndGlyphs" stroke="#000000" stroke-width="0.13" >RESPACK-8</text>
<text transform="translate(835.5 309)" font-size="10" fill="#828288" textLength="37.6" lengthAdjust="spacingAndGlyphs" stroke="#828288" stroke-width="0.1" >&lt;TEXT&gt;</text>
<polyline points="793.2,102.5 805.8,102.5 799.5,90.2 793.2,102.5" fill="none" stroke="#004400" stroke-width="1" stroke-linecap="square" />
<polyline points="799.5,102.5 799.5,163.5 824.5,163.5" fill="none" stroke="#004400" stroke-width="1" stroke-linecap="square" />
<polyline points="413.2,139.5 425.8,139.5 419.5,127.2 413.2,139.5" fill="none" stroke="#004400" stroke-width="1" stroke-linecap="square" />
<polyline points="419.5,139.5 419.5,188.5" fill="none" stroke="#004400" stroke-width="1" stroke-linecap="square" />
<polyline points="419.5,188.5 419.5,206.5" fill="none" stroke="#800000" stroke-width="1" stroke-linecap="square" />
<polyline points="419.5,243.5 419.5,262.5" fill="none" stroke="#800000" stroke-width="1" stroke-linecap="square" />
<polyline points="419.5,262.5 419.5,298.5" fill="none" stroke="#004400" stroke-width="1" stroke-linecap="square" />
<line x1="406.5" y1="298.5" x2="431.5" y2="298.5" stroke="#004400" stroke-width="1" stroke-linecap="square"/>
<line x1="413.5" y1="305.5" x2="425.5" y2="305.5" stroke="#004400" stroke-width="1" stroke-linecap="square"/>
<line x1="418.5" y1="311.5" x2="420.5" y2="311.5" stroke="#004400" stroke-width="1" stroke-linecap="square"/>
<rect x="414.5" y="206.5" width="10" height="37" fill="#c8c8a8" stroke="#800000" stroke-width="1" />
<polyline points="425.5,232.5 431.5,232.5 431.5,225.5 443.5,225.5" fill="none" stroke="#800000" stroke-width="1" stroke-linecap="square" />
<polyline points="429.5,229.5 425.5,232.8 429.5,236.5" fill="none" stroke="#800000" stroke-width="1" stroke-linecap="square" class="aa"/>
<path class="aa" d="M417.6 219.2l3.8 3.6m0-3.6l-3.8 3.6M417.6 224.5h4.6m-4.6 3h4.6M417.6 224.5v7.2m4.6-7.2v7.2m-2.3-3.4v3" stroke="#c80000" stroke-width="0.9" fill="none"/>
<rect x="409.7" y="185.1" width="7" height="7" fill="#ff4040" class="aa"/>
<rect x="409.7" y="259.1" width="7" height="7" fill="#4040ff" class="aa"/>
<rect x="440.2" y="228.1" width="7" height="7" fill="#4040ff" class="aa"/>
<g class="aa"><circle cx="404.5" cy="211.4" r="4.5" fill="#ff0000"/>
<circle cx="404.5" cy="211.4" r="3.15" fill="#240000"/>
<path d="M404.5 208.9v5M402.9 210.5l1.6 -1.6l1.6 1.6" stroke="#ff0000" stroke-width="0.9" fill="none"/></g>
<g class="aa"><circle cx="404.5" cy="238.6" r="4.5" fill="#ff0000"/>
<circle cx="404.5" cy="238.6" r="3.15" fill="#240000"/>
<path d="M404.5 236.1v5M402.9 239.5l1.6 1.6l1.6 -1.6" stroke="#ff0000" stroke-width="0.9" fill="none"/></g>
<text transform="translate(432.2 184) scale(0.87 1)" font-size="16" fill="#000">RV1</text>
<text transform="translate(432 273)" font-size="10" fill="#000000" stroke="#000000" stroke-width="0.13" >1k</text>
<text transform="translate(432.4 285)" font-size="10" fill="#828288" textLength="37.6" lengthAdjust="spacingAndGlyphs" stroke="#828288" stroke-width="0.1" >&lt;TEXT&gt;</text>
<polyline points="123.5,298.5 87.5,298.5 87.5,397.5" fill="none" stroke="#004400" stroke-width="1" stroke-linecap="square" />
<polyline points="62.5,397.5 123.5,397.5" fill="none" stroke="#004400" stroke-width="1" stroke-linecap="square" />
<line x1="62.5" y1="385.5" x2="62.5" y2="409.5" stroke="#004400" stroke-width="1" stroke-linecap="square"/>
<line x1="56.5" y1="391.5" x2="56.5" y2="403.5" stroke="#004400" stroke-width="1" stroke-linecap="square"/>
<line x1="50.5" y1="396.5" x2="50.5" y2="398.5" stroke="#004400" stroke-width="1" stroke-linecap="square"/>
<circle cx="87.5" cy="397.5" r="2.6" fill="#003800"/>
<polyline points="123.5,298.5 144.5,298.5" fill="none" stroke="#800000" stroke-width="1" stroke-linecap="square" />
<polyline points="152.5,298.5 173.5,298.5" fill="none" stroke="#800000" stroke-width="1" stroke-linecap="square" />
<line x1="144.5" y1="286.5" x2="144.5" y2="311.5" stroke="#800000" stroke-width="1" stroke-linecap="square"/>
<line x1="152.5" y1="286.5" x2="152.5" y2="311.5" stroke="#800000" stroke-width="1" stroke-linecap="square"/>
<polyline points="123.5,397.5 144.5,397.5" fill="none" stroke="#800000" stroke-width="1" stroke-linecap="square" />
<polyline points="152.5,397.5 173.5,397.5" fill="none" stroke="#800000" stroke-width="1" stroke-linecap="square" />
<line x1="144.5" y1="385.5" x2="144.5" y2="409.5" stroke="#800000" stroke-width="1" stroke-linecap="square"/>
<line x1="152.5" y1="385.5" x2="152.5" y2="409.5" stroke="#800000" stroke-width="1" stroke-linecap="square"/>
<polyline points="173.5,298.5 308.5,298.5 308.5,360.5 345.5,360.5" fill="none" stroke="#004400" stroke-width="1" stroke-linecap="square" />
<polyline points="173.5,397.5 345.5,397.5" fill="none" stroke="#004400" stroke-width="1" stroke-linecap="square" />
<polyline points="210.5,298.5 210.5,323.5" fill="none" stroke="#004400" stroke-width="1" stroke-linecap="square" />
<polyline points="210.5,372.5 210.5,397.5" fill="none" stroke="#004400" stroke-width="1" stroke-linecap="square" />
<polyline points="210.5,323.5 210.5,335.5" fill="none" stroke="#800000" stroke-width="1" stroke-linecap="square" />
<polyline points="210.5,360.5 210.5,372.5" fill="none" stroke="#800000" stroke-width="1" stroke-linecap="square" />
<line x1="191.6" y1="335.5" x2="229.4" y2="335.5" stroke="#800000" stroke-width="1" stroke-linecap="square"/>
<line x1="191.6" y1="360.5" x2="229.4" y2="360.5" stroke="#800000" stroke-width="1" stroke-linecap="square"/>
<rect x="197.5" y="342.5" width="26" height="12" fill="#c8c8a8" stroke="#800000" stroke-width="1" />
<circle cx="210.5" cy="298.5" r="2.6" fill="#003800"/>
<circle cx="210.5" cy="397.5" r="2.6" fill="#003800"/>
<rect x="120.7" y="288.7" width="7" height="7" fill="#4040ff" class="aa"/>
<rect x="120.7" y="387.9" width="7" height="7" fill="#4040ff" class="aa"/>
<text transform="translate(135 282) scale(0.87 1)" font-size="16" fill="#000">C1</text>
<text transform="translate(134.8 322)" font-size="10" fill="#000000" stroke="#000000" stroke-width="0.13" >1nF</text>
<text transform="translate(135.2 334)" font-size="10" fill="#828288" textLength="37.6" lengthAdjust="spacingAndGlyphs" stroke="#828288" stroke-width="0.1" >&lt;TEXT&gt;</text>
<text transform="translate(135 381) scale(0.87 1)" font-size="16" fill="#000">C2</text>
<text transform="translate(134.8 420)" font-size="10" fill="#000000" stroke="#000000" stroke-width="0.13" >1nF</text>
<text transform="translate(135.2 432)" font-size="10" fill="#828288" textLength="37.6" lengthAdjust="spacingAndGlyphs" stroke="#828288" stroke-width="0.1" >&lt;TEXT&gt;</text>
<text transform="translate(234.5 348) scale(0.87 1)" font-size="16" fill="#000">X1</text>
<text transform="translate(235.3 363)" font-size="10" fill="#000000" textLength="47.3" lengthAdjust="spacingAndGlyphs" stroke="#000000" stroke-width="0.13" >CRYSTAL</text>
<text transform="translate(235.7 375)" font-size="10" fill="#828288" textLength="37.6" lengthAdjust="spacingAndGlyphs" stroke="#828288" stroke-width="0.1" >&lt;TEXT&gt;</text>
<polyline points="62.5,439.3 62.5,451.7 50.5,445.5 62.5,439.3" fill="none" stroke="#004400" stroke-width="1" stroke-linecap="square" />
<polyline points="62.5,445.5 148.5,445.5" fill="none" stroke="#004400" stroke-width="1" stroke-linecap="square" />
<polyline points="197.5,445.5 345.5,445.5" fill="none" stroke="#004400" stroke-width="1" stroke-linecap="square" />
<polyline points="148.5,445.5 163.5,445.5" fill="none" stroke="#800000" stroke-width="1" stroke-linecap="square" />
<polyline points="183.5,445.5 197.5,445.5" fill="none" stroke="#800000" stroke-width="1" stroke-linecap="square" />
<rect x="163.5" y="433.5" width="6" height="24" fill="#c8c8a8" stroke="#800000" stroke-width="1" />
<defs><pattern id="hat" width="4" height="4" patternUnits="userSpaceOnUse" patternTransform="rotate(-45)"><rect width="4" height="4" fill="#c8c8a8"/><rect width="4" height="1.2" fill="#800000"/></pattern></defs>
<rect x="176.5" y="433.5" width="7" height="24" fill="url(#hat)" stroke="#800000" stroke-width="1" class="aa"/>
<rect x="145" y="435.9" width="7" height="7" fill="#ff4040" class="aa"/>
<rect x="194.1" y="435.9" width="7" height="7" fill="#ff4040" class="aa"/>
<text transform="translate(159.5 429) scale(0.87 1)" font-size="16" fill="#000">C3</text>
<text transform="translate(159.4 468)" font-size="10" fill="#000000" stroke="#000000" stroke-width="0.13" >1uF</text>
<text transform="translate(159.8 481)" font-size="10" fill="#828288" textLength="37.6" lengthAdjust="spacingAndGlyphs" stroke="#828288" stroke-width="0.1" >&lt;TEXT&gt;</text>
<circle cx="87.5" cy="445.5" r="2.6" fill="#003800"/>
<circle cx="259.5" cy="445.5" r="2.6" fill="#003800"/>
<polyline points="87.5,445.5 87.5,531.5 345.5,531.5" fill="none" stroke="#004400" stroke-width="1" stroke-linecap="square" />
<polyline points="87.5,507.5 99.5,507.5" fill="none" stroke="#004400" stroke-width="1" stroke-linecap="square" />
<polyline points="99.5,507.5 111.5,507.5" fill="none" stroke="#800000" stroke-width="1" stroke-linecap="square" />
<polyline points="148.5,507.5 160.5,507.5" fill="none" stroke="#800000" stroke-width="1" stroke-linecap="square" />
<rect x="111.5" y="502.5" width="37" height="10" fill="#c8c8a8" stroke="#800000" stroke-width="1" />
<polyline points="160.5,507.5 179.5,507.5" fill="none" stroke="#004400" stroke-width="1" stroke-linecap="square" />
<polyline points="179.5,507.5 192.3,507.5" fill="none" stroke="#800000" stroke-width="1" stroke-linecap="square" />
<polyline points="228.3,507.5 241.5,507.5" fill="none" stroke="#800000" stroke-width="1" stroke-linecap="square" />
<circle cx="195.9" cy="507.5" r="3.1" fill="#c8c8a8" stroke="#800000" stroke-width="1"/>
<circle cx="224.7" cy="507.5" r="3.1" fill="#c8c8a8" stroke="#800000" stroke-width="1"/>
<line x1="192.5" y1="497.5" x2="226.7" y2="497.5" stroke="#800000" stroke-width="1" stroke-linecap="square"/>
<rect x="200.5" y="491.5" width="19" height="6" fill="#c8c8a8" stroke="#800000" stroke-width="1" />
<g class="aa"><circle cx="234.7" cy="495.1" r="4.5" fill="#ff0000"/>
<circle cx="234.7" cy="495.1" r="3.15" fill="#240000"/>
<path d="M234.7 492.6v5M233.1 494.2l1.6 -1.6l1.6 1.6M233.1 496l1.6 1.6l1.6 -1.6" stroke="#ff0000" stroke-width="0.9" fill="none"/></g>
<polyline points="241.5,507.5 259.5,507.5" fill="none" stroke="#004400" stroke-width="1" stroke-linecap="square" />
<circle cx="87.5" cy="507.5" r="2.6" fill="#003800"/>
<circle cx="259.5" cy="507.5" r="2.6" fill="#003800"/>
<rect x="96.3" y="497.5" width="7" height="7" fill="#ff4040" class="aa"/>
<rect x="237.2" y="497.5" width="7" height="7" fill="#ff4040" class="aa"/>
<text transform="translate(110.2 498) scale(0.87 1)" font-size="16" fill="#000">R2</text>
<text transform="translate(110.6 523)" font-size="10" fill="#000000" stroke="#000000" stroke-width="0.13" >10k</text>
<text transform="translate(111 535)" font-size="10" fill="#828288" textLength="37.6" lengthAdjust="spacingAndGlyphs" stroke="#828288" stroke-width="0.1" >&lt;TEXT&gt;</text>
<polyline points="259.5,445.5 259.5,556.5" fill="none" stroke="#004400" stroke-width="1" stroke-linecap="square" />
<polyline points="259.5,556.5 259.5,568.5" fill="none" stroke="#800000" stroke-width="1" stroke-linecap="square" />
<polyline points="259.5,605.5 259.5,617.5" fill="none" stroke="#800000" stroke-width="1" stroke-linecap="square" />
<polyline points="259.5,617.5 259.5,642.5" fill="none" stroke="#004400" stroke-width="1" stroke-linecap="square" />
<rect x="254.5" y="568.5" width="10" height="37" fill="#c8c8a8" stroke="#800000" stroke-width="1" />
<line x1="246.5" y1="642.5" x2="271.5" y2="642.5" stroke="#004400" stroke-width="1" stroke-linecap="square"/>
<line x1="253.5" y1="648.5" x2="265.5" y2="648.5" stroke="#004400" stroke-width="1" stroke-linecap="square"/>
<line x1="258.5" y1="654.5" x2="260.5" y2="654.5" stroke="#004400" stroke-width="1" stroke-linecap="square"/>
<rect x="250.2" y="553.2" width="7" height="7" fill="#ff4040" class="aa"/>
<rect x="250.2" y="614" width="7" height="7" fill="#4040ff" class="aa"/>
<text transform="translate(271.5 581) scale(0.87 1)" font-size="16" fill="#000">R1</text>
<text transform="translate(271.3 596)" font-size="10" fill="#000000" stroke="#000000" stroke-width="0.13" >10k</text>
<text transform="translate(271.7 608)" font-size="10" fill="#828288" textLength="37.6" lengthAdjust="spacingAndGlyphs" stroke="#828288" stroke-width="0.1" >&lt;TEXT&gt;</text>
<polyline points="345.5,360.5 369.5,360.5" fill="none" stroke="#800000" stroke-width="1" stroke-linecap="square" />
<polyline points="345.5,397.5 369.5,397.5" fill="none" stroke="#800000" stroke-width="1" stroke-linecap="square" />
<polyline points="345.5,445.5 369.5,445.5" fill="none" stroke="#800000" stroke-width="1" stroke-linecap="square" />
<polyline points="345.5,507.5 369.5,507.5" fill="none" stroke="#800000" stroke-width="1" stroke-linecap="square" />
<polyline points="345.5,519.5 369.5,519.5" fill="none" stroke="#800000" stroke-width="1" stroke-linecap="square" />
<polyline points="345.5,531.5 369.5,531.5" fill="none" stroke="#800000" stroke-width="1" stroke-linecap="square" />
<polyline points="345.5,580.5 369.5,580.5" fill="none" stroke="#800000" stroke-width="1" stroke-linecap="square" />
<polyline points="345.5,593.5 369.5,593.5" fill="none" stroke="#800000" stroke-width="1" stroke-linecap="square" />
<polyline points="345.5,605.5 369.5,605.5" fill="none" stroke="#800000" stroke-width="1" stroke-linecap="square" />
<polyline points="345.5,617.5 369.5,617.5" fill="none" stroke="#800000" stroke-width="1" stroke-linecap="square" />
<polyline points="345.5,630.5 369.5,630.5" fill="none" stroke="#800000" stroke-width="1" stroke-linecap="square" />
<polyline points="345.5,642.5 369.5,642.5" fill="none" stroke="#800000" stroke-width="1" stroke-linecap="square" />
<polyline points="345.5,654.5 369.5,654.5" fill="none" stroke="#800000" stroke-width="1" stroke-linecap="square" />
<polyline points="345.5,667.5 369.5,667.5" fill="none" stroke="#800000" stroke-width="1" stroke-linecap="square" />
<polyline points="542.5,360.5 566.5,360.5" fill="none" stroke="#800000" stroke-width="1" stroke-linecap="square" />
<polyline points="542.5,470.5 566.5,470.5" fill="none" stroke="#800000" stroke-width="1" stroke-linecap="square" />
<polyline points="542.5,580.5 566.5,580.5" fill="none" stroke="#800000" stroke-width="1" stroke-linecap="square" />
<polyline points="542.5,372.5 566.5,372.5" fill="none" stroke="#800000" stroke-width="1" stroke-linecap="square" />
<polyline points="542.5,482.5 566.5,482.5" fill="none" stroke="#800000" stroke-width="1" stroke-linecap="square" />
<polyline points="542.5,593.5 566.5,593.5" fill="none" stroke="#800000" stroke-width="1" stroke-linecap="square" />
<polyline points="542.5,385.5 566.5,385.5" fill="none" stroke="#800000" stroke-width="1" stroke-linecap="square" />
<polyline points="542.5,494.5 566.5,494.5" fill="none" stroke="#800000" stroke-width="1" stroke-linecap="square" />
<polyline points="542.5,605.5 566.5,605.5" fill="none" stroke="#800000" stroke-width="1" stroke-linecap="square" />
<polyline points="542.5,397.5 566.5,397.5" fill="none" stroke="#800000" stroke-width="1" stroke-linecap="square" />
<polyline points="542.5,507.5 566.5,507.5" fill="none" stroke="#800000" stroke-width="1" stroke-linecap="square" />
<polyline points="542.5,617.5 566.5,617.5" fill="none" stroke="#800000" stroke-width="1" stroke-linecap="square" />
<polyline points="542.5,409.5 566.5,409.5" fill="none" stroke="#800000" stroke-width="1" stroke-linecap="square" />
<polyline points="542.5,519.5 566.5,519.5" fill="none" stroke="#800000" stroke-width="1" stroke-linecap="square" />
<polyline points="542.5,630.5 566.5,630.5" fill="none" stroke="#800000" stroke-width="1" stroke-linecap="square" />
<polyline points="542.5,421.5 566.5,421.5" fill="none" stroke="#800000" stroke-width="1" stroke-linecap="square" />
<polyline points="542.5,531.5 566.5,531.5" fill="none" stroke="#800000" stroke-width="1" stroke-linecap="square" />
<polyline points="542.5,642.5 566.5,642.5" fill="none" stroke="#800000" stroke-width="1" stroke-linecap="square" />
<polyline points="542.5,433.5 566.5,433.5" fill="none" stroke="#800000" stroke-width="1" stroke-linecap="square" />
<polyline points="542.5,544.5 566.5,544.5" fill="none" stroke="#800000" stroke-width="1" stroke-linecap="square" />
<polyline points="542.5,654.5 566.5,654.5" fill="none" stroke="#800000" stroke-width="1" stroke-linecap="square" />
<polyline points="542.5,445.5 566.5,445.5" fill="none" stroke="#800000" stroke-width="1" stroke-linecap="square" />
<polyline points="542.5,556.5 566.5,556.5" fill="none" stroke="#800000" stroke-width="1" stroke-linecap="square" />
<polyline points="542.5,667.5 566.5,667.5" fill="none" stroke="#800000" stroke-width="1" stroke-linecap="square" />
<rect x="369.5" y="348.5" width="173" height="331" fill="#c8c8a8" stroke="#800000" stroke-width="1" />
<text transform="translate(357.3 358.6) scale(1.07 1)" font-size="10" fill="#000000" text-anchor="end" stroke="#000000" stroke-width="0.13" >19</text>
<text transform="translate(376 364) scale(1.04 1)" font-size="10" fill="#000000" stroke="#000000" stroke-width="0.13" >XTAL1</text>
<text transform="translate(357.3 395.6) scale(1.07 1)" font-size="10" fill="#000000" text-anchor="end" stroke="#000000" stroke-width="0.13" >18</text>
<text transform="translate(376 401) scale(1.04 1)" font-size="10" fill="#000000" stroke="#000000" stroke-width="0.13" >XTAL2</text>
<text transform="translate(357.3 443.6) scale(1.07 1)" font-size="10" fill="#000000" text-anchor="end" stroke="#000000" stroke-width="0.13" >9</text>
<text transform="translate(376 449) scale(1.04 1)" font-size="10" fill="#000000" stroke="#000000" stroke-width="0.13" >RST</text>
<rect x="359.3" y="436.3" width="6" height="6" fill="#ff4040" class="aa"/>
<text transform="translate(357.3 505.6) scale(1.07 1)" font-size="10" fill="#000000" text-anchor="end" stroke="#000000" stroke-width="0.13" >29</text>
<text transform="translate(376 511) scale(1.04 1)" font-size="10" fill="#000000" stroke="#000000" stroke-width="0.13" >PSEN</text>
<rect x="359.3" y="498.3" width="6" height="6" fill="#ff4040" class="aa"/>
<text transform="translate(357.3 517.6) scale(1.07 1)" font-size="10" fill="#000000" text-anchor="end" stroke="#000000" stroke-width="0.13" >30</text>
<text transform="translate(376 523) scale(1.04 1)" font-size="10" fill="#000000" stroke="#000000" stroke-width="0.13" >ALE</text>
<rect x="359.3" y="510.3" width="6" height="6" fill="#ff4040" class="aa"/>
<text transform="translate(357.3 529.6) scale(1.07 1)" font-size="10" fill="#000000" text-anchor="end" stroke="#000000" stroke-width="0.13" >31</text>
<text transform="translate(376 535) scale(1.04 1)" font-size="10" fill="#000000" stroke="#000000" stroke-width="0.13" >EA</text>
<rect x="359.3" y="522.3" width="6" height="6" fill="#ff4040" class="aa"/>
<text transform="translate(357.3 578.6) scale(1.07 1)" font-size="10" fill="#000000" text-anchor="end" stroke="#000000" stroke-width="0.13" >1</text>
<text transform="translate(376 584) scale(1.04 1)" font-size="10" fill="#000000" stroke="#000000" stroke-width="0.13" >P1.0</text>
<rect x="359.3" y="571.3" width="6" height="6" fill="#ff4040" class="aa"/>
<text transform="translate(357.3 591.6) scale(1.07 1)" font-size="10" fill="#000000" text-anchor="end" stroke="#000000" stroke-width="0.13" >2</text>
<text transform="translate(376 597) scale(1.04 1)" font-size="10" fill="#000000" stroke="#000000" stroke-width="0.13" >P1.1</text>
<rect x="359.3" y="584.3" width="6" height="6" fill="#ff4040" class="aa"/>
<text transform="translate(357.3 603.6) scale(1.07 1)" font-size="10" fill="#000000" text-anchor="end" stroke="#000000" stroke-width="0.13" >3</text>
<text transform="translate(376 609) scale(1.04 1)" font-size="10" fill="#000000" stroke="#000000" stroke-width="0.13" >P1.2</text>
<rect x="359.3" y="596.3" width="6" height="6" fill="#4040ff" class="aa"/>
<text transform="translate(357.3 615.6) scale(1.07 1)" font-size="10" fill="#000000" text-anchor="end" stroke="#000000" stroke-width="0.13" >4</text>
<text transform="translate(376 621) scale(1.04 1)" font-size="10" fill="#000000" stroke="#000000" stroke-width="0.13" >P1.3</text>
<rect x="359.3" y="608.3" width="6" height="6" fill="#ff4040" class="aa"/>
<text transform="translate(357.3 628.6) scale(1.07 1)" font-size="10" fill="#000000" text-anchor="end" stroke="#000000" stroke-width="0.13" >5</text>
<text transform="translate(376 634) scale(1.04 1)" font-size="10" fill="#000000" stroke="#000000" stroke-width="0.13" >P1.4</text>
<rect x="359.3" y="621.3" width="6" height="6" fill="#ff4040" class="aa"/>
<text transform="translate(357.3 640.6) scale(1.07 1)" font-size="10" fill="#000000" text-anchor="end" stroke="#000000" stroke-width="0.13" >6</text>
<text transform="translate(376 646) scale(1.04 1)" font-size="10" fill="#000000" stroke="#000000" stroke-width="0.13" >P1.5</text>
<rect x="359.3" y="633.3" width="6" height="6" fill="#ff4040" class="aa"/>
<text transform="translate(357.3 652.6) scale(1.07 1)" font-size="10" fill="#000000" text-anchor="end" stroke="#000000" stroke-width="0.13" >7</text>
<text transform="translate(376 658) scale(1.04 1)" font-size="10" fill="#000000" stroke="#000000" stroke-width="0.13" >P1.6</text>
<rect x="359.3" y="645.3" width="6" height="6" fill="#ff4040" class="aa"/>
<text transform="translate(357.3 665.6) scale(1.07 1)" font-size="10" fill="#000000" text-anchor="end" stroke="#000000" stroke-width="0.13" >8</text>
<text transform="translate(376 671) scale(1.04 1)" font-size="10" fill="#000000" stroke="#000000" stroke-width="0.13" >P1.7</text>
<rect x="359.3" y="658.3" width="6" height="6" fill="#ff4040" class="aa"/>
<text transform="translate(553.8 358.6) scale(1.07 1)" font-size="10" fill="#000000" stroke="#000000" stroke-width="0.13" >39</text>
<text transform="translate(536.6 364)" font-size="10" fill="#000000" text-anchor="end" stroke="#000000" stroke-width="0.13" >P0.0/AD0</text>
<rect x="547" y="351.3" width="6" height="6" fill="#ff4040" class="aa"/>
<text transform="translate(553.8 468.6) scale(1.07 1)" font-size="10" fill="#000000" stroke="#000000" stroke-width="0.13" >21</text>
<text transform="translate(536.6 474)" font-size="10" fill="#000000" text-anchor="end" stroke="#000000" stroke-width="0.13" >P2.0/A8</text>
<rect x="547" y="461.3" width="6" height="6" fill="#ff4040" class="aa"/>
<text transform="translate(553.8 578.6) scale(1.07 1)" font-size="10" fill="#000000" stroke="#000000" stroke-width="0.13" >10</text>
<text transform="translate(536.6 584)" font-size="10" fill="#000000" text-anchor="end" stroke="#000000" stroke-width="0.13" >P3.0/RXD</text>
<rect x="547" y="571.3" width="6" height="6" fill="#ff4040" class="aa"/>
<text transform="translate(553.8 370.6) scale(1.07 1)" font-size="10" fill="#000000" stroke="#000000" stroke-width="0.13" >38</text>
<text transform="translate(536.6 376)" font-size="10" fill="#000000" text-anchor="end" stroke="#000000" stroke-width="0.13" >P0.1/AD1</text>
<rect x="547" y="363.3" width="6" height="6" fill="#ff4040" class="aa"/>
<text transform="translate(553.8 480.6) scale(1.07 1)" font-size="10" fill="#000000" stroke="#000000" stroke-width="0.13" >22</text>
<text transform="translate(536.6 486)" font-size="10" fill="#000000" text-anchor="end" stroke="#000000" stroke-width="0.13" >P2.1/A9</text>
<rect x="547" y="473.3" width="6" height="6" fill="#ff4040" class="aa"/>
<text transform="translate(553.8 591.6) scale(1.07 1)" font-size="10" fill="#000000" stroke="#000000" stroke-width="0.13" >11</text>
<text transform="translate(536.6 597)" font-size="10" fill="#000000" text-anchor="end" stroke="#000000" stroke-width="0.13" >P3.1/TXD</text>
<rect x="547" y="584.3" width="6" height="6" fill="#ff4040" class="aa"/>
<text transform="translate(553.8 383.6) scale(1.07 1)" font-size="10" fill="#000000" stroke="#000000" stroke-width="0.13" >37</text>
<text transform="translate(536.6 389)" font-size="10" fill="#000000" text-anchor="end" stroke="#000000" stroke-width="0.13" >P0.2/AD2</text>
<rect x="547" y="376.3" width="6" height="6" fill="#ff4040" class="aa"/>
<text transform="translate(553.8 492.6) scale(1.07 1)" font-size="10" fill="#000000" stroke="#000000" stroke-width="0.13" >23</text>
<text transform="translate(536.6 498)" font-size="10" fill="#000000" text-anchor="end" stroke="#000000" stroke-width="0.13" >P2.2/A10</text>
<rect x="547" y="485.3" width="6" height="6" fill="#ff4040" class="aa"/>
<text transform="translate(553.8 603.6) scale(1.07 1)" font-size="10" fill="#000000" stroke="#000000" stroke-width="0.13" >12</text>
<text transform="translate(536.6 609)" font-size="10" fill="#000000" text-anchor="end" stroke="#000000" stroke-width="0.13" >P3.2/INT0</text>
<rect x="547" y="596.3" width="6" height="6" fill="#ff4040" class="aa"/>
<text transform="translate(553.8 395.6) scale(1.07 1)" font-size="10" fill="#000000" stroke="#000000" stroke-width="0.13" >36</text>
<text transform="translate(536.6 401)" font-size="10" fill="#000000" text-anchor="end" stroke="#000000" stroke-width="0.13" >P0.3/AD3</text>
<rect x="547" y="388.3" width="6" height="6" fill="#ff4040" class="aa"/>
<text transform="translate(553.8 505.6) scale(1.07 1)" font-size="10" fill="#000000" stroke="#000000" stroke-width="0.13" >24</text>
<text transform="translate(536.6 511)" font-size="10" fill="#000000" text-anchor="end" stroke="#000000" stroke-width="0.13" >P2.3/A11</text>
<rect x="547" y="498.3" width="6" height="6" fill="#ff4040" class="aa"/>
<text transform="translate(553.8 615.6) scale(1.07 1)" font-size="10" fill="#000000" stroke="#000000" stroke-width="0.13" >13</text>
<text transform="translate(536.6 621)" font-size="10" fill="#000000" text-anchor="end" stroke="#000000" stroke-width="0.13" >P3.3/INT1</text>
<rect x="547" y="608.3" width="6" height="6" fill="#ff4040" class="aa"/>
<text transform="translate(553.8 407.6) scale(1.07 1)" font-size="10" fill="#000000" stroke="#000000" stroke-width="0.13" >35</text>
<text transform="translate(536.6 413)" font-size="10" fill="#000000" text-anchor="end" stroke="#000000" stroke-width="0.13" >P0.4/AD4</text>
<rect x="547" y="400.3" width="6" height="6" fill="#ff4040" class="aa"/>
<text transform="translate(553.8 517.6) scale(1.07 1)" font-size="10" fill="#000000" stroke="#000000" stroke-width="0.13" >25</text>
<text transform="translate(536.6 523)" font-size="10" fill="#000000" text-anchor="end" stroke="#000000" stroke-width="0.13" >P2.4/A12</text>
<rect x="547" y="510.3" width="6" height="6" fill="#4040ff" class="aa"/>
<text transform="translate(553.8 628.6) scale(1.07 1)" font-size="10" fill="#000000" stroke="#000000" stroke-width="0.13" >14</text>
<text transform="translate(536.6 634)" font-size="10" fill="#000000" text-anchor="end" stroke="#000000" stroke-width="0.13" >P3.4/T0</text>
<rect x="547" y="621.3" width="6" height="6" fill="#ff4040" class="aa"/>
<text transform="translate(553.8 419.6) scale(1.07 1)" font-size="10" fill="#000000" stroke="#000000" stroke-width="0.13" >34</text>
<text transform="translate(536.6 425)" font-size="10" fill="#000000" text-anchor="end" stroke="#000000" stroke-width="0.13" >P0.5/AD5</text>
<rect x="547" y="412.3" width="6" height="6" fill="#4040ff" class="aa"/>
<text transform="translate(553.8 529.6) scale(1.07 1)" font-size="10" fill="#000000" stroke="#000000" stroke-width="0.13" >26</text>
<text transform="translate(536.6 535)" font-size="10" fill="#000000" text-anchor="end" stroke="#000000" stroke-width="0.13" >P2.5/A13</text>
<rect x="547" y="522.3" width="6" height="6" fill="#ff4040" class="aa"/>
<text transform="translate(553.8 640.6) scale(1.07 1)" font-size="10" fill="#000000" stroke="#000000" stroke-width="0.13" >15</text>
<text transform="translate(536.6 646)" font-size="10" fill="#000000" text-anchor="end" stroke="#000000" stroke-width="0.13" >P3.5/T1</text>
<rect x="547" y="633.3" width="6" height="6" fill="#ff4040" class="aa"/>
<text transform="translate(553.8 431.6) scale(1.07 1)" font-size="10" fill="#000000" stroke="#000000" stroke-width="0.13" >33</text>
<text transform="translate(536.6 437)" font-size="10" fill="#000000" text-anchor="end" stroke="#000000" stroke-width="0.13" >P0.6/AD6</text>
<rect x="547" y="424.3" width="6" height="6" fill="#ff4040" class="aa"/>
<text transform="translate(553.8 542.6) scale(1.07 1)" font-size="10" fill="#000000" stroke="#000000" stroke-width="0.13" >27</text>
<text transform="translate(536.6 548)" font-size="10" fill="#000000" text-anchor="end" stroke="#000000" stroke-width="0.13" >P2.6/A14</text>
<rect x="547" y="535.3" width="6" height="6" fill="#4040ff" class="aa"/>
<text transform="translate(553.8 652.6) scale(1.07 1)" font-size="10" fill="#000000" stroke="#000000" stroke-width="0.13" >16</text>
<text transform="translate(536.6 658)" font-size="10" fill="#000000" text-anchor="end" stroke="#000000" stroke-width="0.13" >P3.6/WR</text>
<rect x="547" y="645.3" width="6" height="6" fill="#ff4040" class="aa"/>
<text transform="translate(553.8 443.6) scale(1.07 1)" font-size="10" fill="#000000" stroke="#000000" stroke-width="0.13" >32</text>
<text transform="translate(536.6 449)" font-size="10" fill="#000000" text-anchor="end" stroke="#000000" stroke-width="0.13" >P0.7/AD7</text>
<rect x="547" y="436.3" width="6" height="6" fill="#ff4040" class="aa"/>
<text transform="translate(553.8 554.6) scale(1.07 1)" font-size="10" fill="#000000" stroke="#000000" stroke-width="0.13" >28</text>
<text transform="translate(536.6 560)" font-size="10" fill="#000000" text-anchor="end" stroke="#000000" stroke-width="0.13" >P2.7/A15</text>
<rect x="547" y="547.3" width="6" height="6" fill="#ff4040" class="aa"/>
<text transform="translate(553.8 665.6) scale(1.07 1)" font-size="10" fill="#000000" stroke="#000000" stroke-width="0.13" >17</text>
<text transform="translate(536.6 671)" font-size="10" fill="#000000" text-anchor="end" stroke="#000000" stroke-width="0.13" >P3.7/RD</text>
<rect x="547" y="658.3" width="6" height="6" fill="#ff4040" class="aa"/>
<polyline points="369.5,357.2 374.3,360.5 369.5,363.8" fill="none" stroke="#800000" stroke-width="1" stroke-linecap="square" class="aa"/>
<line x1="376.5" y1="501.5" x2="403.5" y2="501.5" stroke="#000" stroke-width="1" stroke-linecap="square"/>
<line x1="376.5" y1="525.5" x2="389.5" y2="525.5" stroke="#000" stroke-width="1" stroke-linecap="square"/>
<line x1="514.2" y1="599.5" x2="535.5" y2="599.5" stroke="#000" stroke-width="1" stroke-linecap="square"/>
<line x1="514.2" y1="611.5" x2="535.5" y2="611.5" stroke="#000" stroke-width="1" stroke-linecap="square"/>
<line x1="520.6" y1="648.5" x2="535.5" y2="648.5" stroke="#000" stroke-width="1" stroke-linecap="square"/>
<line x1="522" y1="661.5" x2="535.5" y2="661.5" stroke="#000" stroke-width="1" stroke-linecap="square"/>
<text transform="translate(369 344) scale(0.87 1)" font-size="16" fill="#000">U1</text>
<text transform="translate(368.8 690)" font-size="10" fill="#000000" textLength="42.8" lengthAdjust="spacingAndGlyphs" stroke="#000000" stroke-width="0.13" >AT89C52</text>
<text transform="translate(369.2 702)" font-size="10" fill="#828288" textLength="37.6" lengthAdjust="spacingAndGlyphs" stroke="#828288" stroke-width="0.1" >&lt;TEXT&gt;</text>
<polyline points="320.5,580.5 345.5,580.5" fill="none" stroke="#004400" stroke-width="1" stroke-linecap="square" />
<circle cx="320.5" cy="580.5" r="2.7" fill="#003800"/>
<text transform="translate(320.5 577.6) scale(0.97 1)" font-size="10" fill="#000000" stroke="#000000" stroke-width="0.13" >SCLK</text>
<polyline points="320.5,593.5 345.5,593.5" fill="none" stroke="#004400" stroke-width="1" stroke-linecap="square" />
<circle cx="320.5" cy="593.5" r="2.7" fill="#003800"/>
<text transform="translate(320.5 590.6) scale(0.97 1)" font-size="10" fill="#000000" stroke="#000000" stroke-width="0.13" >RWIO</text>
<polyline points="320.5,605.5 345.5,605.5" fill="none" stroke="#004400" stroke-width="1" stroke-linecap="square" />
<circle cx="320.5" cy="605.5" r="2.7" fill="#003800"/>
<text transform="translate(320.5 602.6) scale(0.97 1)" font-size="10" fill="#000000" stroke="#000000" stroke-width="0.13" >CE</text>
<polyline points="566.5,470.5 591.5,470.5 591.5,519.5 750.5,519.5" fill="none" stroke="#004400" stroke-width="1" stroke-linecap="square" />
<polyline points="566.5,544.5 725.5,544.5 725.5,703.5 713.5,703.5" fill="none" stroke="#004400" stroke-width="1" stroke-linecap="square" />
<circle cx="615.5" cy="544.5" r="2.6" fill="#003800"/>
<circle cx="615.5" cy="421.5" r="3.6" fill="none" stroke="#0000c0" stroke-width="1"/>
<polyline points="566.5,667.5 579.5,667.5 579.5,753.5 824.5,753.5" fill="none" stroke="#004400" stroke-width="1" stroke-linecap="square" />
<polyline points="566.5,580.5 633.5,580.5" fill="none" stroke="#004400" stroke-width="1" stroke-linecap="square" />
<polyline points="566.5,593.5 627.5,593.5 627.5,605.5 633.5,605.5" fill="none" stroke="#004400" stroke-width="1" stroke-linecap="square" />
<polyline points="566.5,605.5 615.5,605.5 615.5,630.5 633.5,630.5" fill="none" stroke="#004400" stroke-width="1" stroke-linecap="square" />
<polyline points="566.5,617.5 603.5,617.5 603.5,654.5 633.5,654.5" fill="none" stroke="#004400" stroke-width="1" stroke-linecap="square" />
<polyline points="713.5,580.5 713.5,728.5" fill="none" stroke="#004400" stroke-width="1" stroke-linecap="square" />
<line x1="701.5" y1="728.5" x2="725.5" y2="728.5" stroke="#004400" stroke-width="1" stroke-linecap="square"/>
<line x1="707.5" y1="734.5" x2="719.5" y2="734.5" stroke="#004400" stroke-width="1" stroke-linecap="square"/>
<line x1="712.5" y1="740.5" x2="714.5" y2="740.5" stroke="#004400" stroke-width="1" stroke-linecap="square"/>
<polyline points="695.5,580.5 713.5,580.5" fill="none" stroke="#004400" stroke-width="1" stroke-linecap="square" />
<polyline points="633.5,580.5 646.1,580.5" fill="none" stroke="#800000" stroke-width="1" stroke-linecap="square" />
<polyline points="682.1,580.5 695.5,580.5" fill="none" stroke="#800000" stroke-width="1" stroke-linecap="square" />
<circle cx="649.7" cy="580.5" r="3.1" fill="#c8c8a8" stroke="#800000" stroke-width="1"/>
<circle cx="678.5" cy="580.5" r="3.1" fill="#c8c8a8" stroke="#800000" stroke-width="1"/>
<line x1="646.3" y1="571.5" x2="681.4" y2="571.5" stroke="#800000" stroke-width="1" stroke-linecap="square"/>
<rect x="654.5" y="564.5" width="20" height="7" fill="#c8c8a8" stroke="#800000" stroke-width="1" />
<g class="aa"><circle cx="688.5" cy="568.1" r="4.5" fill="#ff0000"/>
<circle cx="688.5" cy="568.1" r="3.15" fill="#240000"/>
<path d="M688.5 565.6v5M686.9 567.2l1.6 -1.6l1.6 1.6M686.9 569l1.6 1.6l1.6 -1.6" stroke="#ff0000" stroke-width="0.9" fill="none"/></g>
<rect x="630.3" y="571" width="6.6" height="6.6" fill="#ff4040" class="aa"/>
<rect x="691.2" y="570.9" width="8" height="7" fill="#4040ff" class="aa"/>
<polyline points="695.5,605.5 713.5,605.5" fill="none" stroke="#004400" stroke-width="1" stroke-linecap="square" />
<polyline points="633.5,605.5 646.1,605.5" fill="none" stroke="#800000" stroke-width="1" stroke-linecap="square" />
<polyline points="682.1,605.5 695.5,605.5" fill="none" stroke="#800000" stroke-width="1" stroke-linecap="square" />
<circle cx="649.7" cy="605.5" r="3.1" fill="#c8c8a8" stroke="#800000" stroke-width="1"/>
<circle cx="678.5" cy="605.5" r="3.1" fill="#c8c8a8" stroke="#800000" stroke-width="1"/>
<line x1="646.3" y1="596.5" x2="681.4" y2="596.5" stroke="#800000" stroke-width="1" stroke-linecap="square"/>
<rect x="654.5" y="589.5" width="20" height="7" fill="#c8c8a8" stroke="#800000" stroke-width="1" />
<g class="aa"><circle cx="688.5" cy="593.1" r="4.5" fill="#ff0000"/>
<circle cx="688.5" cy="593.1" r="3.15" fill="#240000"/>
<path d="M688.5 590.6v5M686.9 592.2l1.6 -1.6l1.6 1.6M686.9 594l1.6 1.6l1.6 -1.6" stroke="#ff0000" stroke-width="0.9" fill="none"/></g>
<rect x="630.3" y="596" width="6.6" height="6.6" fill="#ff4040" class="aa"/>
<rect x="691.2" y="595.9" width="8" height="7" fill="#4040ff" class="aa"/>
<circle cx="713.5" cy="605.5" r="2.6" fill="#003800"/>
<polyline points="695.5,630.5 713.5,630.5" fill="none" stroke="#004400" stroke-width="1" stroke-linecap="square" />
<polyline points="633.5,630.5 646.1,630.5" fill="none" stroke="#800000" stroke-width="1" stroke-linecap="square" />
<polyline points="682.1,630.5 695.5,630.5" fill="none" stroke="#800000" stroke-width="1" stroke-linecap="square" />
<circle cx="649.7" cy="630.5" r="3.1" fill="#c8c8a8" stroke="#800000" stroke-width="1"/>
<circle cx="678.5" cy="630.5" r="3.1" fill="#c8c8a8" stroke="#800000" stroke-width="1"/>
<line x1="646.3" y1="621.5" x2="681.4" y2="621.5" stroke="#800000" stroke-width="1" stroke-linecap="square"/>
<rect x="654.5" y="614.5" width="20" height="7" fill="#c8c8a8" stroke="#800000" stroke-width="1" />
<g class="aa"><circle cx="688.5" cy="618.1" r="4.5" fill="#ff0000"/>
<circle cx="688.5" cy="618.1" r="3.15" fill="#240000"/>
<path d="M688.5 615.6v5M686.9 617.2l1.6 -1.6l1.6 1.6M686.9 619l1.6 1.6l1.6 -1.6" stroke="#ff0000" stroke-width="0.9" fill="none"/></g>
<rect x="630.3" y="621" width="6.6" height="6.6" fill="#ff4040" class="aa"/>
<rect x="691.2" y="620.9" width="8" height="7" fill="#4040ff" class="aa"/>
<circle cx="713.5" cy="630.5" r="2.6" fill="#003800"/>
<polyline points="695.5,654.5 713.5,654.5" fill="none" stroke="#004400" stroke-width="1" stroke-linecap="square" />
<polyline points="633.5,654.5 646.1,654.5" fill="none" stroke="#800000" stroke-width="1" stroke-linecap="square" />
<polyline points="682.1,654.5 695.5,654.5" fill="none" stroke="#800000" stroke-width="1" stroke-linecap="square" />
<circle cx="649.7" cy="654.5" r="3.1" fill="#c8c8a8" stroke="#800000" stroke-width="1"/>
<circle cx="678.5" cy="654.5" r="3.1" fill="#c8c8a8" stroke="#800000" stroke-width="1"/>
<line x1="646.3" y1="645.5" x2="681.4" y2="645.5" stroke="#800000" stroke-width="1" stroke-linecap="square"/>
<rect x="654.5" y="638.5" width="20" height="7" fill="#c8c8a8" stroke="#800000" stroke-width="1" />
<g class="aa"><circle cx="688.5" cy="642.1" r="4.5" fill="#ff0000"/>
<circle cx="688.5" cy="642.1" r="3.15" fill="#240000"/>
<path d="M688.5 639.6v5M686.9 641.2l1.6 -1.6l1.6 1.6M686.9 643l1.6 1.6l1.6 -1.6" stroke="#ff0000" stroke-width="0.9" fill="none"/></g>
<rect x="630.3" y="645" width="6.6" height="6.6" fill="#ff4040" class="aa"/>
<rect x="691.2" y="644.9" width="8" height="7" fill="#4040ff" class="aa"/>
<circle cx="713.5" cy="654.5" r="2.6" fill="#003800"/>
<circle cx="713.5" cy="703.5" r="2.6" fill="#003800"/>
<polyline points="750.5,519.5 762.5,519.5" fill="none" stroke="#800000" stroke-width="1" stroke-linecap="square" />
<polyline points="799.5,519.5 811.5,519.5" fill="none" stroke="#800000" stroke-width="1" stroke-linecap="square" />
<rect x="762.5" y="514.5" width="37" height="10" fill="#c8c8a8" stroke="#800000" stroke-width="1" />
<rect x="747" y="510.1" width="7" height="7" fill="#ff4040" class="aa"/>
<text transform="translate(761 510) scale(0.87 1)" font-size="16" fill="#000">R6</text>
<text transform="translate(760.8 535)" font-size="10" fill="#000000" stroke="#000000" stroke-width="0.13" >2.2k</text>
<text transform="translate(761.2 547)" font-size="10" fill="#828288" textLength="37.6" lengthAdjust="spacingAndGlyphs" stroke="#828288" stroke-width="0.1" >&lt;TEXT&gt;</text>
<polyline points="811.5,519.5 824.5,519.5" fill="none" stroke="#004400" stroke-width="1" stroke-linecap="square" />
<polyline points="824.5,519.5 836.5,519.5" fill="none" stroke="#800000" stroke-width="1" stroke-linecap="square" />
<polyline points="842.5,512.7 861.5,494.5 861.5,482.5" fill="none" stroke="#800000" stroke-width="1" stroke-linecap="square" />
<polyline points="842.5,525.8 861.5,544.5 861.5,556.5" fill="none" stroke="#800000" stroke-width="1" stroke-linecap="square" />
<path class="aa" d="M843.2 512.2L848.2 501.8L854.8 507.2Z" fill="#c8c8a8" stroke="#800000" stroke-width="1"/>
<rect x="836.5" y="500.5" width="6" height="37" fill="#c8c8a8" stroke="#800000" stroke-width="1" />
<polyline points="861.5,556.5 861.5,580.5" fill="none" stroke="#004400" stroke-width="1" stroke-linecap="square" />
<line x1="848.5" y1="580.5" x2="873.5" y2="580.5" stroke="#004400" stroke-width="1" stroke-linecap="square"/>
<line x1="854.5" y1="587.5" x2="867.5" y2="587.5" stroke="#004400" stroke-width="1" stroke-linecap="square"/>
<line x1="860.5" y1="593.5" x2="862.5" y2="593.5" stroke="#004400" stroke-width="1" stroke-linecap="square"/>
<rect x="851.2" y="553.1" width="7" height="7" fill="#4040ff" class="aa"/>
<text transform="translate(868.2 507) scale(0.87 1)" font-size="16" fill="#000">Q1</text>
<text transform="translate(868 522)" font-size="10" fill="#000000" textLength="19.5" lengthAdjust="spacingAndGlyphs" stroke="#000000" stroke-width="0.13" >PNP</text>
<text transform="translate(868.4 534)" font-size="10" fill="#828288" textLength="37.6" lengthAdjust="spacingAndGlyphs" stroke="#828288" stroke-width="0.1" >&lt;TEXT&gt;</text>
<polyline points="855.2,397.5 867.8,397.5 861.5,386.2 855.2,397.5" fill="none" stroke="#004400" stroke-width="1" stroke-linecap="square" />
<polyline points="861.5,397.5 861.5,445.5 885.5,445.5" fill="none" stroke="#004400" stroke-width="1" stroke-linecap="square" />
<polyline points="861.5,482.5 861.5,470.5 885.5,470.5" fill="none" stroke="#004400" stroke-width="1" stroke-linecap="square" />
<polyline points="885.5,445.5 900,445.5" fill="none" stroke="#800000" stroke-width="1" stroke-linecap="square" />
<polyline points="885.5,470.5 900,470.5" fill="none" stroke="#800000" stroke-width="1" stroke-linecap="square" />
<path class="aa" d="M916.5 439.5C903.5 439.5 897.3 449 897.3 458C897.3 467 903.5 476.5 916.5 476.5Z" fill="#c8c8a8" stroke="#800000" stroke-width="1"/>
<rect x="882" y="436.1" width="7" height="7" fill="#ff4040" class="aa"/>
<text transform="translate(896.1 435) scale(0.87 1)" font-size="16" fill="#000">LS1</text>
<text transform="translate(895.9 487)" font-size="10" fill="#000000" textLength="38.7" lengthAdjust="spacingAndGlyphs" stroke="#000000" stroke-width="0.13" >BUZZER</text>
<text transform="translate(896.3 499)" font-size="10" fill="#828288" textLength="37.6" lengthAdjust="spacingAndGlyphs" stroke="#828288" stroke-width="0.1" >&lt;TEXT&gt;</text>
<polyline points="824.5,740.5 848.5,740.5" fill="none" stroke="#800000" stroke-width="1" stroke-linecap="square" />
<polyline points="824.5,753.5 848.5,753.5" fill="none" stroke="#800000" stroke-width="1" stroke-linecap="square" />
<polyline points="824.5,765.5 848.5,765.5" fill="none" stroke="#800000" stroke-width="1" stroke-linecap="square" />
<rect x="848.5" y="728.5" width="86" height="49" fill="#c8c8a8" stroke="#800000" stroke-width="1" />
<text transform="translate(835.8 738.6) scale(1.07 1)" font-size="10" fill="#000000" text-anchor="end" stroke="#000000" stroke-width="0.13" >3</text>
<text transform="translate(854.4 743.8) scale(1.04 1)" font-size="10" fill="#000000" stroke="#000000" stroke-width="0.13" >VCC</text>
<text transform="translate(835.8 751.6) scale(1.07 1)" font-size="10" fill="#000000" text-anchor="end" stroke="#000000" stroke-width="0.13" >2</text>
<text transform="translate(854.4 756.8) scale(1.04 1)" font-size="10" fill="#000000" stroke="#000000" stroke-width="0.13" >DQ</text>
<text transform="translate(835.8 763.6) scale(1.07 1)" font-size="10" fill="#000000" text-anchor="end" stroke="#000000" stroke-width="0.13" >1</text>
<text transform="translate(854.4 768.8) scale(1.04 1)" font-size="10" fill="#000000" stroke="#000000" stroke-width="0.13" >GND</text>
<rect x="837.5" y="743.6" width="7" height="7" fill="#ff4040" class="aa"/>
<polyline points="793.2,703.5 805.8,703.5 799.5,692.2 793.2,703.5" fill="none" stroke="#004400" stroke-width="1" stroke-linecap="square" />
<polyline points="799.5,703.5 799.5,740.5 824.5,740.5" fill="none" stroke="#004400" stroke-width="1" stroke-linecap="square" />
<polyline points="824.5,765.5 799.5,765.5 799.5,790.5" fill="none" stroke="#004400" stroke-width="1" stroke-linecap="square" />
<line x1="787.5" y1="790.5" x2="811.5" y2="790.5" stroke="#004400" stroke-width="1" stroke-linecap="square"/>
<line x1="793.5" y1="796.5" x2="805.5" y2="796.5" stroke="#004400" stroke-width="1" stroke-linecap="square"/>
<line x1="798.5" y1="802.5" x2="800.5" y2="802.5" stroke="#004400" stroke-width="1" stroke-linecap="square"/>
<rect x="885.5" y="740.5" width="37" height="13" fill="#004000" stroke="#00e000" stroke-width="1.6" />
<text transform="translate(904 750.2) scale(1.04 1)" font-size="10" fill="#30ff30" text-anchor="middle" stroke="#30ff30" stroke-width="0.13" >36.0</text>
<g class="aa"><circle cx="891.5" cy="765.6" r="4.5" fill="#ff0000"/>
<circle cx="891.5" cy="765.6" r="3.15" fill="#240000"/>
<path d="M891.5 763.1v5M889.9 766.5l1.6 1.6l1.6 -1.6" stroke="#ff0000" stroke-width="0.9" fill="none"/></g>
<g class="aa"><circle cx="916.5" cy="765.6" r="4.5" fill="#ff0000"/>
<circle cx="916.5" cy="765.6" r="3.15" fill="#240000"/>
<path d="M916.5 763.1v5M914.9 764.7l1.6 -1.6l1.6 1.6" stroke="#ff0000" stroke-width="0.9" fill="none"/></g>
<text transform="translate(847.4 724) scale(0.87 1)" font-size="16" fill="#000">U2</text>
<text transform="translate(847.2 788)" font-size="10" fill="#000000" textLength="42.3" lengthAdjust="spacingAndGlyphs" stroke="#000000" stroke-width="0.13" >DS18B20</text>
<text transform="translate(847.6 800)" font-size="10" fill="#828288" textLength="37.6" lengthAdjust="spacingAndGlyphs" stroke="#828288" stroke-width="0.1" >&lt;TEXT&gt;</text>
<polyline points="160.5,691.5 185.5,691.5" fill="none" stroke="#800000" stroke-width="1" stroke-linecap="square" />
<polyline points="160.5,703.5 185.5,703.5" fill="none" stroke="#800000" stroke-width="1" stroke-linecap="square" />
<polyline points="160.5,740.5 185.5,740.5" fill="none" stroke="#800000" stroke-width="1" stroke-linecap="square" />
<polyline points="160.5,753.5 185.5,753.5" fill="none" stroke="#800000" stroke-width="1" stroke-linecap="square" />
<polyline points="160.5,765.5 185.5,765.5" fill="none" stroke="#800000" stroke-width="1" stroke-linecap="square" />
<polyline points="246.5,691.5 271.5,691.5" fill="none" stroke="#800000" stroke-width="1" stroke-linecap="square" />
<polyline points="246.5,765.5 271.5,765.5" fill="none" stroke="#800000" stroke-width="1" stroke-linecap="square" />
<rect x="185.5" y="679.5" width="61" height="98" fill="#c8c8a8" stroke="#800000" stroke-width="1" />
<text transform="translate(172.2 689.6) scale(1.07 1)" font-size="10" fill="#000000" text-anchor="end" stroke="#000000" stroke-width="0.13" >8</text>
<text transform="translate(191.6 694.8) scale(1.04 1)" font-size="10" fill="#000000" stroke="#000000" stroke-width="0.13" >VCC1</text>
<text transform="translate(172.2 701.6) scale(1.07 1)" font-size="10" fill="#000000" text-anchor="end" stroke="#000000" stroke-width="0.13" >1</text>
<text transform="translate(191.6 706.8) scale(1.04 1)" font-size="10" fill="#000000" stroke="#000000" stroke-width="0.13" >VCC2</text>
<text transform="translate(172.2 738.6) scale(1.07 1)" font-size="10" fill="#000000" text-anchor="end" stroke="#000000" stroke-width="0.13" >5</text>
<text transform="translate(191.6 743.8) scale(1.04 1)" font-size="10" fill="#000000" stroke="#000000" stroke-width="0.13" >RST</text>
<rect x="175" y="732" width="5.2" height="5.8" fill="#4040ff" class="aa"/>
<text transform="translate(172.2 751.6) scale(1.07 1)" font-size="10" fill="#000000" text-anchor="end" stroke="#000000" stroke-width="0.13" >7</text>
<text transform="translate(191.6 756.8) scale(1.04 1)" font-size="10" fill="#000000" stroke="#000000" stroke-width="0.13" >SCLK</text>
<rect x="175" y="745" width="5.2" height="5.8" fill="#ff4040" class="aa"/>
<text transform="translate(172.2 763.6) scale(1.07 1)" font-size="10" fill="#000000" text-anchor="end" stroke="#000000" stroke-width="0.13" >6</text>
<text transform="translate(191.6 768.8) scale(1.04 1)" font-size="10" fill="#000000" stroke="#000000" stroke-width="0.13" >I/O</text>
<rect x="175" y="757" width="5.2" height="5.8" fill="#ff4040" class="aa"/>
<text transform="translate(228.1 694.8) scale(1.04 1)" font-size="10" fill="#000000" stroke="#000000" stroke-width="0.13" >X1</text>
<text transform="translate(228.1 768.8) scale(1.04 1)" font-size="10" fill="#000000" stroke="#000000" stroke-width="0.13" >X2</text>
<line x1="191.2" y1="734.5" x2="212" y2="734.5" stroke="#000" stroke-width="1" stroke-linecap="square"/>
<text transform="translate(259.2 689.6) scale(1.07 1)" font-size="10" fill="#000000" stroke="#000000" stroke-width="0.13" >2</text>
<text transform="translate(259.2 763.6) scale(1.07 1)" font-size="10" fill="#000000" stroke="#000000" stroke-width="0.13" >3</text>
<rect x="251.5" y="681.7" width="7" height="7" fill="#4040ff" class="aa"/>
<rect x="251.5" y="755.6" width="7" height="7" fill="#4040ff" class="aa"/>
<text transform="translate(184.3 675) scale(0.87 1)" font-size="16" fill="#000">U3</text>
<text transform="translate(184.1 788)" font-size="10" fill="#000000" textLength="36.5" lengthAdjust="spacingAndGlyphs" stroke="#000000" stroke-width="0.13" >DS1302</text>
<text transform="translate(184.5 800)" font-size="10" fill="#828288" textLength="37.6" lengthAdjust="spacingAndGlyphs" stroke="#828288" stroke-width="0.1" >&lt;TEXT&gt;</text>
<polyline points="271.5,691.5 271.5,703.5" fill="none" stroke="#004400" stroke-width="1" stroke-linecap="square" />
<polyline points="271.5,753.5 271.5,765.5" fill="none" stroke="#004400" stroke-width="1" stroke-linecap="square" />
<polyline points="271.5,703.5 271.5,716.5" fill="none" stroke="#800000" stroke-width="1" stroke-linecap="square" />
<polyline points="271.5,740.5 271.5,753.5" fill="none" stroke="#800000" stroke-width="1" stroke-linecap="square" />
<line x1="252.6" y1="716.5" x2="290.4" y2="716.5" stroke="#800000" stroke-width="1" stroke-linecap="square"/>
<line x1="252.6" y1="740.5" x2="290.4" y2="740.5" stroke="#800000" stroke-width="1" stroke-linecap="square"/>
<rect x="258.5" y="722.5" width="26" height="12" fill="#c8c8a8" stroke="#800000" stroke-width="1" />
<rect x="262" y="700.1" width="7" height="7" fill="#4040ff" class="aa"/>
<rect x="262" y="750.1" width="7" height="7" fill="#4040ff" class="aa"/>
<text transform="translate(296.7 729) scale(0.87 1)" font-size="16" fill="#000">X2</text>
<text transform="translate(272.2 768)" font-size="10" fill="#828288" textLength="37.6" lengthAdjust="spacingAndGlyphs" stroke="#828288" stroke-width="0.1" >&lt;TEXT&gt;</text>
<text transform="translate(246.9 792)" font-size="10" fill="#000000" textLength="47.5" lengthAdjust="spacingAndGlyphs" stroke="#000000" stroke-width="0.13" >CRYSTAL</text>
<polyline points="154.2,654.5 166.8,654.5 160.5,643.2 154.2,654.5" fill="none" stroke="#004400" stroke-width="1" stroke-linecap="square" />
<polyline points="160.5,654.5 160.5,703.5" fill="none" stroke="#004400" stroke-width="1" stroke-linecap="square" />
<text transform="translate(152 634)" font-size="10" fill="#000000" textLength="19.5" lengthAdjust="spacingAndGlyphs" stroke="#000000" stroke-width="0.13" >VCC</text>
<line x1="74.5" y1="679.5" x2="74.5" y2="703.5" stroke="#004400" stroke-width="1" stroke-linecap="square"/>
<line x1="68.5" y1="685.5" x2="68.5" y2="697.5" stroke="#004400" stroke-width="1" stroke-linecap="square"/>
<line x1="62.5" y1="690.5" x2="62.5" y2="692.5" stroke="#004400" stroke-width="1" stroke-linecap="square"/>
<polyline points="74.5,691.5 99.5,691.5" fill="none" stroke="#004400" stroke-width="1" stroke-linecap="square" />
<polyline points="99.5,691.5 124.5,691.5" fill="none" stroke="#800000" stroke-width="1" stroke-linecap="square" />
<polyline points="130.5,691.5 148.5,691.5" fill="none" stroke="#800000" stroke-width="1" stroke-linecap="square" />
<polyline points="148.5,691.5 160.5,691.5" fill="none" stroke="#004400" stroke-width="1" stroke-linecap="square" />
<line x1="130.5" y1="679.5" x2="130.5" y2="703.5" stroke="#800000" stroke-width="1" stroke-linecap="square"/>
<path class="aa" d="M118 679.5Q130.5 691.5 118 703.5" fill="none" stroke="#800000" stroke-width="1"/>
<rect x="96.1" y="682.1" width="7" height="7" fill="#4040ff" class="aa"/>
<text transform="translate(54.5 701) rotate(-90)" font-size="10" fill="#000000" textLength="20.3" lengthAdjust="spacingAndGlyphs" stroke="#000000" stroke-width="0.13" >GND</text>
<text transform="translate(110.4 675) scale(0.87 1)" font-size="16" fill="#000">C4</text>
<text transform="translate(109.7 714)" font-size="10" fill="#000000" textLength="29" lengthAdjust="spacingAndGlyphs" stroke="#000000" stroke-width="0.13" >220uF</text>
<text transform="translate(110.6 727)" font-size="10" fill="#828288" textLength="37.6" lengthAdjust="spacingAndGlyphs" stroke="#828288" stroke-width="0.1" >&lt;TEXT&gt;</text>
<polyline points="31.2,716.5 43.8,716.5 37.5,704.2 31.2,716.5" fill="none" stroke="#004400" stroke-width="1" stroke-linecap="square" />
<polyline points="37.5,716.5 37.5,765.5 50.5,765.5" fill="none" stroke="#004400" stroke-width="1" stroke-linecap="square" />
<text transform="translate(61.6 781)" font-size="10" fill="#000000" stroke="#000000" stroke-width="0.13" >10k</text>
<text transform="translate(74.6 781)" font-size="10" fill="#828288" textLength="24.8" lengthAdjust="spacingAndGlyphs" stroke="#828288" stroke-width="0.1" >EXT&gt;</text>
<text transform="translate(62 792)" font-size="10" fill="#828288" textLength="37.6" lengthAdjust="spacingAndGlyphs" stroke="#828288" stroke-width="0.1" >&lt;TEXT&gt;</text>
<polyline points="37.5,740.5 50.5,740.5" fill="none" stroke="#004400" stroke-width="1" stroke-linecap="square" />
<polyline points="111.5,740.5 160.5,740.5" fill="none" stroke="#004400" stroke-width="1" stroke-linecap="square" />
<text transform="translate(61.8 730) scale(0.87 1)" font-size="16" fill="#000">R3</text>
<polyline points="50.5,740.5 62.5,740.5" fill="none" stroke="#800000" stroke-width="1" stroke-linecap="square" />
<polyline points="99.5,740.5 111.5,740.5" fill="none" stroke="#800000" stroke-width="1" stroke-linecap="square" />
<rect x="62.5" y="735.5" width="37" height="10" fill="#c8c8a8" stroke="#800000" stroke-width="1" />
<rect x="47.1" y="731.5" width="7" height="7" fill="#ff4040" class="aa"/>
<rect x="108" y="731.5" width="7" height="7" fill="#4040ff" class="aa"/>
<text transform="translate(136.4 737.8) scale(0.98 1)" font-size="10" fill="#000000" stroke="#000000" stroke-width="0.13" >CE</text>
<circle cx="37.5" cy="740.5" r="2.6" fill="#003800"/>
<polyline points="37.5,753.5 50.5,753.5" fill="none" stroke="#004400" stroke-width="1" stroke-linecap="square" />
<polyline points="111.5,753.5 160.5,753.5" fill="none" stroke="#004400" stroke-width="1" stroke-linecap="square" />
<text transform="translate(61.8 743) scale(0.87 1)" font-size="16" fill="#000">R4</text>
<polyline points="50.5,753.5 62.5,753.5" fill="none" stroke="#800000" stroke-width="1" stroke-linecap="square" />
<polyline points="99.5,753.5 111.5,753.5" fill="none" stroke="#800000" stroke-width="1" stroke-linecap="square" />
<rect x="62.5" y="748.5" width="37" height="10" fill="#c8c8a8" stroke="#800000" stroke-width="1" />
<rect x="47.1" y="744.5" width="7" height="7" fill="#ff4040" class="aa"/>
<rect x="108" y="744.5" width="7" height="7" fill="#ff4040" class="aa"/>
<text transform="translate(136.4 750.8) scale(0.98 1)" font-size="10" fill="#000000" stroke="#000000" stroke-width="0.13" >SCLK</text>
<circle cx="37.5" cy="753.5" r="2.6" fill="#003800"/>
<polyline points="37.5,765.5 50.5,765.5" fill="none" stroke="#004400" stroke-width="1" stroke-linecap="square" />
<polyline points="111.5,765.5 160.5,765.5" fill="none" stroke="#004400" stroke-width="1" stroke-linecap="square" />
<text transform="translate(61.8 756) scale(0.87 1)" font-size="16" fill="#000">R5</text>
<polyline points="50.5,765.5 62.5,765.5" fill="none" stroke="#800000" stroke-width="1" stroke-linecap="square" />
<polyline points="99.5,765.5 111.5,765.5" fill="none" stroke="#800000" stroke-width="1" stroke-linecap="square" />
<rect x="62.5" y="760.5" width="37" height="10" fill="#c8c8a8" stroke="#800000" stroke-width="1" />
<rect x="47.1" y="756.5" width="7" height="7" fill="#ff4040" class="aa"/>
<rect x="108" y="756.5" width="7" height="7" fill="#ff4040" class="aa"/>
<text transform="translate(136.4 762.8) scale(0.98 1)" font-size="10" fill="#000000" stroke="#000000" stroke-width="0.13" >RWIO</text>
<g class="aa">
<rect x="140.5" y="108.5" width="189" height="89.5" rx="1" fill="#203020" opacity="0.06"/>
<rect x="139.5" y="107.5" width="189" height="89.5" rx="1" fill="#203020" opacity="0.09"/>
<rect x="138.5" y="106.5" width="189" height="89.5" rx="1" fill="#203020" opacity="0.12"/>
<rect x="137.5" y="105.5" width="189" height="89.5" rx="1" fill="#203020" opacity="0.16"/>
<rect x="136.5" y="104.5" width="189" height="89.5" fill="#dcf0fa" stroke="#5f6b73" stroke-width="1"/>
<rect x="137.5" y="105.5" width="187" height="87.5" fill="none" stroke="#f6fcff" stroke-width="1"/>
<rect x="143.5" y="133.5" width="175" height="54" fill="#c0c0c0" stroke="#404040" stroke-width="1"/>
<rect x="144.5" y="134.5" width="173" height="52" fill="none" stroke="#ffffff" stroke-width="1"/>
<rect x="298.5" y="110.5" width="20" height="20" rx="2.5" fill="#e2f3fc" stroke="#6f7f88" stroke-width="1.2"/>
<path d="M304.4 116.2l8.2 8.2m0-8.2l-8.2 8.2" stroke="#3c3c50" stroke-width="4.2" stroke-linecap="butt" fill="none"/>
<path d="M305 116.8l7 7m0-7l-7 7" stroke="#f2f2f2" stroke-width="2.1" stroke-linecap="butt" fill="none"/>
<text x="151" y="156.5" font-family="'Liberation Mono',monospace" font-size="13.4" fill="#c00000" xml:space="preserve">Time: <tspan fill="#0000c0">14-25-36</tspan></text>
<text x="151" y="169.8" font-family="'Liberation Mono',monospace" font-size="13.4" fill="#c00000" xml:space="preserve">Date: <tspan fill="#0000c0">08-01-20</tspan></text>
</g>
</svg>
</body></html>
